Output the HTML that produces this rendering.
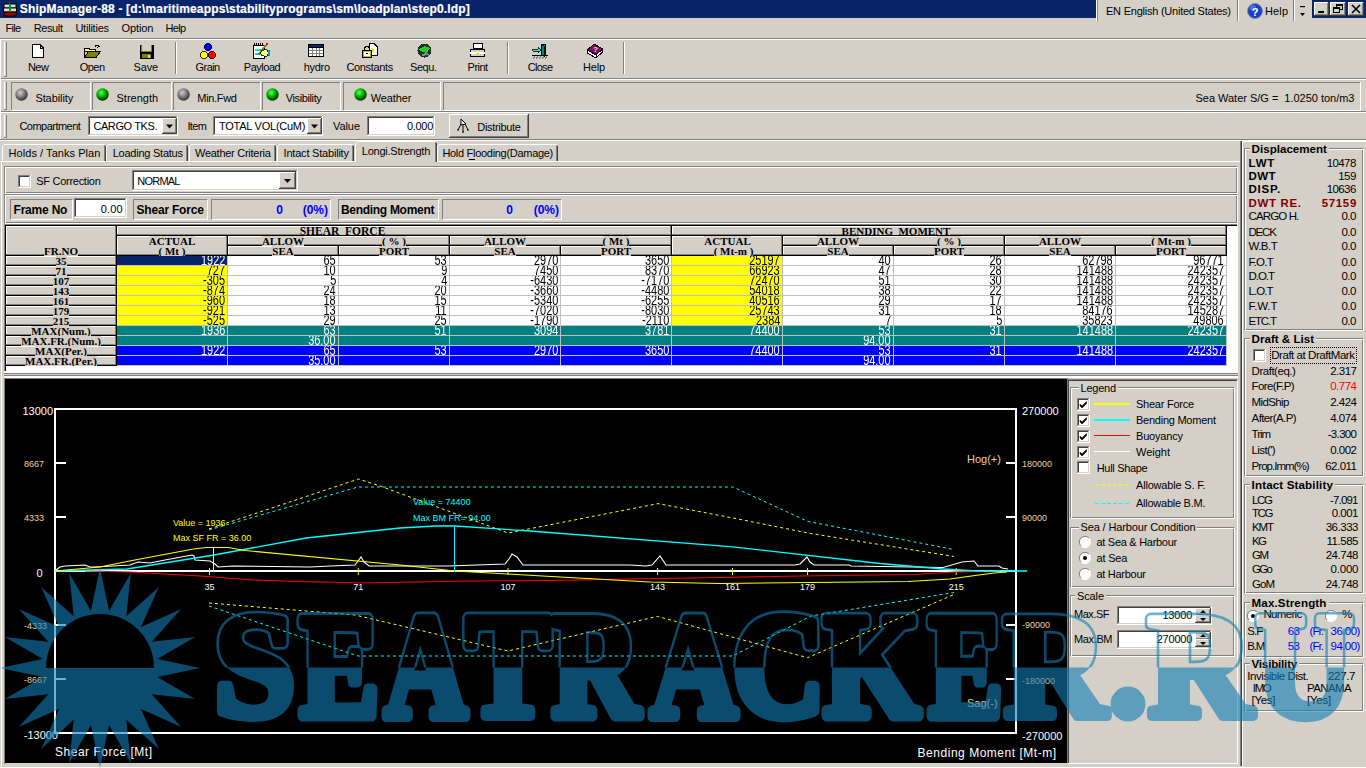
<!DOCTYPE html><html><head><meta charset="utf-8"><style>
html,body{margin:0;padding:0;width:1366px;height:768px;overflow:hidden;background:#d4d0c8;position:relative;font-family:'Liberation Sans', sans-serif;font-size:11px;}
.t{position:absolute;white-space:pre;line-height:11px;font-size:11px;}
.b{position:absolute;box-sizing:border-box;}
svg.b{overflow:visible}
</style></head><body>
<div class="b" style="left:0px;top:0px;width:1096px;height:18px;background:#0a246a;"></div>
<svg class="b" style="left:3px;top:1px" width="14" height="16"><rect x="1" y="3" width="12" height="4" fill="#d8d8d8" stroke="#000" stroke-width="1"/><rect x="0.5" y="7" width="13" height="4" fill="#e0e0e0" stroke="#000" stroke-width="1"/><rect x="1" y="11" width="12" height="4" fill="#a00000" stroke="#000" stroke-width="1"/><rect x="6" y="3" width="2" height="8" fill="#00a000"/><rect x="6" y="0" width="1" height="3" fill="#c00000"/></svg>
<div class="t" style="left:19.8px;top:2.84px;font-size:12px;line-height:12px;color:#fff;font-weight:bold;letter-spacing:0.173px;-webkit-text-stroke:0.2px #fff;">ShipManager-88 - [d:\maritimeapps\stabilityprograms\sm\loadplan\step0.ldp]</div>
<div class="b" style="left:1096px;top:0px;width:1px;height:21px;background:#fff;"></div>
<div class="b" style="left:1097px;top:0px;width:1px;height:21px;background:#808080;"></div>
<div class="t" style="left:1106.0px;top:5.69px;letter-spacing:-0.232px;">EN English (United States)</div>
<div class="b" style="left:1237px;top:0px;width:1px;height:21px;background:#808080;"></div>
<div class="b" style="left:1238px;top:0px;width:1px;height:21px;background:#fff;"></div>
<svg class="b" style="left:1247px;top:3px" width="16" height="16"><circle cx="8" cy="8" r="7.5" fill="#1a3fc0" stroke="#7d8db0" stroke-width="1"/><circle cx="6" cy="5" r="3" fill="#6f8ff0" opacity="0.6"/><text x="8" y="12.5" font-family="Liberation Sans" font-weight="bold" font-size="11" fill="#fff" text-anchor="middle">?</text></svg>
<div class="t" style="left:1265.0px;top:5.69px;letter-spacing:0.133px;">Help</div>
<div class="b" style="left:1293px;top:0px;width:1px;height:21px;background:#808080;"></div>
<div class="b" style="left:1294px;top:0px;width:1px;height:21px;background:#fff;"></div>
<svg class="b" style="left:1299px;top:4px" width="8" height="14"><rect x="1" y="2" width="5" height="1.2" fill="#000"/><path d="M1 9 h5 l-2.5 3z" fill="#000"/></svg>
<div class="b" style="left:1312px;top:0px;width:54px;height:18px;background:#0a246a;"></div>
<div class="b" style="left:1314px;top:2px;width:15px;height:14px;background:#d4d0c8;"></div>
<div class="b" style="left:1314px;top:2px;width:15px;height:1px;background:#fff;"></div>
<div class="b" style="left:1314px;top:2px;width:1px;height:14px;background:#fff;"></div>
<div class="b" style="left:1314px;top:15px;width:15px;height:1px;background:#404040;"></div>
<div class="b" style="left:1328px;top:2px;width:1px;height:14px;background:#404040;"></div>
<div class="b" style="left:1315px;top:14px;width:13px;height:1px;background:#808080;"></div>
<div class="b" style="left:1327px;top:3px;width:1px;height:12px;background:#808080;"></div>
<div class="b" style="left:1318px;top:11px;width:6px;height:2px;background:#000;"></div>
<div class="b" style="left:1330px;top:2px;width:16px;height:14px;background:#d4d0c8;"></div>
<div class="b" style="left:1330px;top:2px;width:16px;height:1px;background:#fff;"></div>
<div class="b" style="left:1330px;top:2px;width:1px;height:14px;background:#fff;"></div>
<div class="b" style="left:1330px;top:15px;width:16px;height:1px;background:#404040;"></div>
<div class="b" style="left:1345px;top:2px;width:1px;height:14px;background:#404040;"></div>
<div class="b" style="left:1331px;top:14px;width:14px;height:1px;background:#808080;"></div>
<div class="b" style="left:1344px;top:3px;width:1px;height:12px;background:#808080;"></div>
<svg class="b" style="left:1330px;top:2px" width="16" height="14"><rect x="6.5" y="2.5" width="6" height="5" fill="none" stroke="#000"/><rect x="6" y="2" width="7" height="2" fill="#000"/><rect x="3.5" y="5.5" width="6" height="5" fill="#d4d0c8" stroke="#000"/><rect x="3" y="5" width="7" height="2" fill="#000"/></svg>
<div class="b" style="left:1348px;top:2px;width:16px;height:14px;background:#d4d0c8;"></div>
<div class="b" style="left:1348px;top:2px;width:16px;height:1px;background:#fff;"></div>
<div class="b" style="left:1348px;top:2px;width:1px;height:14px;background:#fff;"></div>
<div class="b" style="left:1348px;top:15px;width:16px;height:1px;background:#404040;"></div>
<div class="b" style="left:1363px;top:2px;width:1px;height:14px;background:#404040;"></div>
<div class="b" style="left:1349px;top:14px;width:14px;height:1px;background:#808080;"></div>
<div class="b" style="left:1362px;top:3px;width:1px;height:12px;background:#808080;"></div>
<svg class="b" style="left:1348px;top:2px" width="16" height="14"><path d="M4 3 L12 11 M12 3 L4 11" stroke="#000" stroke-width="1.6"/></svg>
<div class="t" style="left:5.6px;top:22.69px;letter-spacing:-0.7px;">File</div>
<div class="t" style="left:33.7px;top:22.69px;letter-spacing:-0.38px;">Result</div>
<div class="t" style="left:75.4px;top:22.69px;letter-spacing:-0.225px;">Utilities</div>
<div class="t" style="left:121.5px;top:22.69px;letter-spacing:-0.1px;">Option</div>
<div class="t" style="left:165.4px;top:22.69px;letter-spacing:-0.6px;">Help</div>
<div class="b" style="left:0px;top:38px;width:1366px;height:1px;background:#808080;"></div>
<div class="b" style="left:0px;top:39px;width:1366px;height:1px;background:#fff;"></div>
<div class="b" style="left:0px;top:78px;width:1366px;height:1px;background:#808080;"></div>
<div class="b" style="left:0px;top:79px;width:1366px;height:1px;background:#fff;"></div>
<div class="b" style="left:0px;top:111px;width:1366px;height:1px;background:#808080;"></div>
<div class="b" style="left:0px;top:112px;width:1366px;height:1px;background:#fff;"></div>
<div class="b" style="left:0px;top:139px;width:1366px;height:1px;background:#808080;"></div>
<div class="b" style="left:0px;top:140px;width:1366px;height:1px;background:#fff;"></div>
<div class="b" style="left:0px;top:39px;width:1px;height:100px;background:#fff;"></div>
<div class="b" style="left:4px;top:42px;width:1px;height:34px;background:#fff;"></div>
<div class="b" style="left:6px;top:42px;width:1px;height:34px;background:#808080;"></div>
<div class="b" style="left:4px;top:76px;width:3px;height:1px;background:#808080;"></div>
<div class="b" style="left:5px;top:42px;width:1px;height:34px;background:#d4d0c8;"></div>
<div class="b" style="left:4px;top:82px;width:1px;height:27px;background:#fff;"></div>
<div class="b" style="left:6px;top:82px;width:1px;height:27px;background:#808080;"></div>
<div class="b" style="left:4px;top:109px;width:3px;height:1px;background:#808080;"></div>
<div class="b" style="left:5px;top:82px;width:1px;height:27px;background:#d4d0c8;"></div>
<div class="b" style="left:4px;top:115px;width:1px;height:22px;background:#fff;"></div>
<div class="b" style="left:6px;top:115px;width:1px;height:22px;background:#808080;"></div>
<div class="b" style="left:4px;top:137px;width:3px;height:1px;background:#808080;"></div>
<div class="b" style="left:5px;top:115px;width:1px;height:22px;background:#d4d0c8;"></div>
<div class="b" style="left:175px;top:42px;width:1px;height:32px;background:#808080;"></div>
<div class="b" style="left:176px;top:42px;width:1px;height:32px;background:#fff;"></div>
<div class="b" style="left:507px;top:42px;width:1px;height:32px;background:#808080;"></div>
<div class="b" style="left:508px;top:42px;width:1px;height:32px;background:#fff;"></div>
<div class="b" style="left:623px;top:42px;width:1px;height:32px;background:#808080;"></div>
<div class="b" style="left:624px;top:42px;width:1px;height:32px;background:#fff;"></div>
<div class="t" style="left:27.9px;top:61.69px;letter-spacing:-0.5px;">New</div>
<div class="t" style="left:79.8px;top:61.69px;letter-spacing:-0.567px;">Open</div>
<div class="t" style="left:133.6px;top:61.69px;letter-spacing:-0.167px;">Save</div>
<div class="t" style="left:195.6px;top:61.69px;letter-spacing:-0.575px;">Grain</div>
<div class="t" style="left:243.8px;top:61.69px;letter-spacing:-0.483px;">Payload</div>
<div class="t" style="left:303.7px;top:61.69px;letter-spacing:-0.3px;">hydro</div>
<div class="t" style="left:346.4px;top:61.69px;letter-spacing:-0.325px;">Constants</div>
<div class="t" style="left:410.0px;top:61.69px;letter-spacing:-0.425px;">Sequ.</div>
<div class="t" style="left:467.6px;top:61.69px;letter-spacing:-0.55px;">Print</div>
<div class="t" style="left:527.7px;top:61.69px;letter-spacing:-0.7px;">Close</div>
<div class="t" style="left:583.0px;top:61.69px;letter-spacing:-0.2px;">Help</div>
<svg class="b" style="left:32px;top:44px" width="12" height="14" shape-rendering="crispEdges"><path d="M0.5 0.5 H8 L11.5 4 V13.5 H0.5 Z" fill="#fff" stroke="#000"/><path d="M8 0.5 V4 H11.5" fill="none" stroke="#000"/></svg>
<svg class="b" style="left:84px;top:44px" width="17" height="14" shape-rendering="crispEdges"><path d="M11 3 Q12 0 15 2" stroke="#000" fill="none" stroke-width="1.2"/><path d="M14 1 l2 1.5 -2.5 1z" fill="#000"/><path d="M0.5 4.5 H5 L6 5.5 H11 V7.5 H0.5 Z" fill="#ffff80" stroke="#000"/><path d="M0.5 5 V13.5 H12 L16.5 7.5 H4.5 L0.5 13.5" fill="#808000" stroke="#000"/></svg>
<svg class="b" style="left:139px;top:44px" width="15" height="15" shape-rendering="crispEdges"><rect x="0.5" y="0.5" width="14" height="14" fill="#000"/><rect x="2" y="1" width="11" height="7" fill="#808000"/><rect x="3" y="1" width="9" height="5.5" fill="#d4d0c8"/><rect x="3" y="10" width="9" height="4" fill="#808000"/><rect x="9" y="10.5" width="2" height="3" fill="#d4d0c8"/></svg>
<svg class="b" style="left:200px;top:43px" width="17" height="17" shape-rendering="crispEdges"><circle cx="8" cy="4" r="3.6" fill="#0000ff" stroke="#000" stroke-width="0.8"/><circle cx="4" cy="12" r="3.6" fill="#ffff00" stroke="#000" stroke-width="0.8"/><circle cx="12" cy="12" r="3.6" fill="#ff0000" stroke="#000" stroke-width="0.8"/></svg>
<svg class="b" style="left:253px;top:43px" width="17" height="16" shape-rendering="crispEdges"><rect x="0.5" y="2.5" width="11" height="13" fill="#fff" stroke="#000"/><path d="M1 1 h10" stroke="#000" stroke-dasharray="1 1" stroke-width="2"/><rect x="2" y="6" width="8" height="2" fill="#00e0e0"/><rect x="2" y="10" width="8" height="2" fill="#00e0e0"/><path d="M5 12 L13 2" stroke="#808000" stroke-width="2"/><path d="M13 2 l1.5 -1.5" stroke="#ff0000" stroke-width="2"/><ellipse cx="11.5" cy="10" rx="4" ry="3.5" fill="#ffff80" stroke="#000" stroke-width="0.8"/><rect x="15" y="7" width="1.5" height="6" fill="#00a0c0"/></svg>
<svg class="b" style="left:308px;top:44px" width="16" height="13" shape-rendering="crispEdges"><rect x="0" y="0" width="16" height="13" fill="#000"/><rect x="1" y="1" width="14" height="2" fill="#0a246a"/><rect x="1" y="4" width="14" height="8" fill="#fff"/><path d="M1 6.5 H15 M1 9.5 H15 M4.5 4 V12 M8 4 V12 M11.5 4 V12" stroke="#808080" stroke-width="1"/></svg>
<svg class="b" style="left:362px;top:43px" width="16" height="15" shape-rendering="crispEdges"><path d="M7.5 0.5 H12 L15.5 4 V12.5 H7.5 Z" fill="#fff" stroke="#000"/><path d="M10 5 l3 2 -3 2z" fill="#e0e000"/><path d="M2.5 7 V5 Q5 2 7.5 5 V7" stroke="#000" fill="none"/><rect x="0.5" y="7.5" width="9" height="7" fill="#c0c000" stroke="#000"/><rect x="2" y="9" width="6" height="4" fill="#fff"/><path d="M3.5 10 h3 l-1.5 2z" fill="#000"/></svg>
<svg class="b" style="left:417px;top:43px" width="15" height="15" shape-rendering="crispEdges"><circle cx="7.5" cy="7.5" r="7" fill="#2a2a2a"/><path d="M2 6 L8 3 L13 5 L10 10 L6 9 L3 8z" fill="#20d020"/><path d="M5 13 Q8 10 12 12" stroke="#7090a0" stroke-width="2" fill="none"/></svg>
<svg class="b" style="left:469px;top:43px" width="17" height="15" shape-rendering="crispEdges"><rect x="4.5" y="0.5" width="9" height="5" fill="#fff" stroke="#000"/><path d="M1.5 6.5 H15.5 V13.5 H1.5 Z" fill="#d4d0c8" stroke="#000"/><rect x="1" y="9" width="15" height="2" fill="#fff"/><rect x="7" y="9.5" width="3" height="1" fill="#e0e000"/><path d="M2 13.5 H15" stroke="#000"/></svg>
<svg class="b" style="left:532px;top:44px" width="17" height="15" shape-rendering="crispEdges"><path d="M9.5 0.5 H13.5 V11.5 H9.5 Z" fill="#00c0c0" stroke="#000"/><path d="M9.5 1 L12.5 3 V13 L9.5 11.5z" fill="#008080" stroke="#000" stroke-width="0.8"/><path d="M0.5 5 H6 V3 L9 6 L6 9 V7 H0.5 Z" fill="#40e0e0" stroke="#000" stroke-width="0.8"/><path d="M0 11.5 H16" stroke="#000"/><path d="M1 14.5 l2 -2 M4 14.5 l2 -2 M7 14.5 l2 -2 M10 14.5 l2 -2 M13 14.5 l2 -2" stroke="#808080"/></svg>
<svg class="b" style="left:587px;top:43px" width="16" height="16" shape-rendering="crispEdges"><path d="M0.5 10 L9 15 L15.5 9 V6 L7 1 L0.5 7z" fill="#fff" stroke="#000"/><path d="M0.5 7 L7 1 L15.5 6 L9 12 Z" fill="#800080" stroke="#000"/><path d="M9 12 V15 M0.5 7 V10" stroke="#000"/><text x="8.5" y="9" font-family="Liberation Sans" font-weight="bold" font-size="8" fill="#ffff00" text-anchor="middle">?</text></svg>
<div class="b" style="left:11px;top:82px;width:80px;height:29px;"></div>
<div class="b" style="left:11px;top:82px;width:80px;height:1px;background:#808080;"></div>
<div class="b" style="left:11px;top:82px;width:1px;height:29px;background:#808080;"></div>
<div class="b" style="left:11px;top:110px;width:80px;height:1px;background:#fff;"></div>
<div class="b" style="left:90px;top:82px;width:1px;height:29px;background:#fff;"></div>
<svg class="b" style="left:15px;top:88px" width="14" height="14"><defs><radialGradient id="g11" cx="0.4" cy="0.35" r="0.6"><stop offset="0" stop-color="#d0d0d0"/><stop offset="0.5" stop-color="#888"/><stop offset="1" stop-color="#404040"/></radialGradient></defs><circle cx="6.5" cy="6.5" r="6.2" fill="url(#g11)"/></svg>
<div class="t" style="left:35.4px;top:92.69px;letter-spacing:-0.088px;">Stability</div>
<div class="b" style="left:92px;top:82px;width:80px;height:29px;"></div>
<div class="b" style="left:92px;top:82px;width:80px;height:1px;background:#808080;"></div>
<div class="b" style="left:92px;top:82px;width:1px;height:29px;background:#808080;"></div>
<div class="b" style="left:92px;top:110px;width:80px;height:1px;background:#fff;"></div>
<div class="b" style="left:171px;top:82px;width:1px;height:29px;background:#fff;"></div>
<svg class="b" style="left:96px;top:88px" width="14" height="14"><defs><radialGradient id="g92" cx="0.4" cy="0.35" r="0.6"><stop offset="0" stop-color="#60ff60"/><stop offset="0.5" stop-color="#00c000"/><stop offset="1" stop-color="#004000"/></radialGradient></defs><circle cx="6.5" cy="6.5" r="6.2" fill="url(#g92)"/></svg>
<div class="t" style="left:116.5px;top:92.69px;letter-spacing:0.014px;">Strength</div>
<div class="b" style="left:173px;top:82px;width:88px;height:29px;"></div>
<div class="b" style="left:173px;top:82px;width:88px;height:1px;background:#808080;"></div>
<div class="b" style="left:173px;top:82px;width:1px;height:29px;background:#808080;"></div>
<div class="b" style="left:173px;top:110px;width:88px;height:1px;background:#fff;"></div>
<div class="b" style="left:260px;top:82px;width:1px;height:29px;background:#fff;"></div>
<svg class="b" style="left:177px;top:88px" width="14" height="14"><defs><radialGradient id="g173" cx="0.4" cy="0.35" r="0.6"><stop offset="0" stop-color="#d0d0d0"/><stop offset="0.5" stop-color="#888"/><stop offset="1" stop-color="#404040"/></radialGradient></defs><circle cx="6.5" cy="6.5" r="6.2" fill="url(#g173)"/></svg>
<div class="t" style="left:197.3px;top:92.69px;letter-spacing:-0.333px;">Min.Fwd</div>
<div class="b" style="left:262px;top:82px;width:79px;height:29px;"></div>
<div class="b" style="left:262px;top:82px;width:79px;height:1px;background:#808080;"></div>
<div class="b" style="left:262px;top:82px;width:1px;height:29px;background:#808080;"></div>
<div class="b" style="left:262px;top:110px;width:79px;height:1px;background:#fff;"></div>
<div class="b" style="left:340px;top:82px;width:1px;height:29px;background:#fff;"></div>
<svg class="b" style="left:266px;top:88px" width="14" height="14"><defs><radialGradient id="g262" cx="0.4" cy="0.35" r="0.6"><stop offset="0" stop-color="#60ff60"/><stop offset="0.5" stop-color="#00c000"/><stop offset="1" stop-color="#004000"/></radialGradient></defs><circle cx="6.5" cy="6.5" r="6.2" fill="url(#g262)"/></svg>
<div class="t" style="left:285.7px;top:92.69px;letter-spacing:-0.378px;">Visibility</div>
<div class="b" style="left:343px;top:82px;width:98px;height:29px;"></div>
<div class="b" style="left:343px;top:82px;width:98px;height:1px;background:#808080;"></div>
<div class="b" style="left:343px;top:82px;width:1px;height:29px;background:#808080;"></div>
<div class="b" style="left:343px;top:110px;width:98px;height:1px;background:#fff;"></div>
<div class="b" style="left:440px;top:82px;width:1px;height:29px;background:#fff;"></div>
<svg class="b" style="left:353.5px;top:88px" width="14" height="14"><defs><radialGradient id="g343" cx="0.4" cy="0.35" r="0.6"><stop offset="0" stop-color="#60ff60"/><stop offset="0.5" stop-color="#00c000"/><stop offset="1" stop-color="#004000"/></radialGradient></defs><circle cx="6.5" cy="6.5" r="6.2" fill="url(#g343)"/></svg>
<div class="t" style="left:370.8px;top:92.69px;letter-spacing:-0.133px;">Weather</div>
<div class="b" style="left:443px;top:82px;width:918px;height:29px;"></div>
<div class="b" style="left:443px;top:82px;width:918px;height:1px;background:#808080;"></div>
<div class="b" style="left:443px;top:82px;width:1px;height:29px;background:#808080;"></div>
<div class="b" style="left:443px;top:110px;width:918px;height:1px;background:#fff;"></div>
<div class="b" style="left:1360px;top:82px;width:1px;height:29px;background:#fff;"></div>
<svg class="b" style="left:447px;top:88px" width="14" height="14"><defs><radialGradient id="g443" cx="0.4" cy="0.35" r="0.6"><stop offset="0" stop-color="#d0d0d0"/><stop offset="0.5" stop-color="#888"/><stop offset="1" stop-color="#404040"/></radialGradient></defs><circle cx="6.5" cy="6.5" r="6.2" fill="url(#g443)"/></svg>
<div class="b" style="left:447px;top:86px;width:16px;height:18px;background:#d4d0c8;"></div>
<div class="t" style="right:11.517000000000053px;text-align:right;top:92.69px;letter-spacing:-0.017px;">Sea Water S/G =  1.0250 ton/m3</div>
<div class="t" style="left:19.4px;top:120.69px;letter-spacing:-0.52px;">Compartment</div>
<div class="b" style="left:88px;top:116px;width:90px;height:20px;background:#fff;"></div>
<div class="b" style="left:88px;top:116px;width:90px;height:1px;background:#808080;"></div>
<div class="b" style="left:88px;top:116px;width:1px;height:20px;background:#808080;"></div>
<div class="b" style="left:89px;top:117px;width:88px;height:1px;background:#404040;"></div>
<div class="b" style="left:89px;top:117px;width:1px;height:18px;background:#404040;"></div>
<div class="b" style="left:88px;top:135px;width:90px;height:1px;background:#fff;"></div>
<div class="b" style="left:177px;top:116px;width:1px;height:20px;background:#fff;"></div>
<div class="b" style="left:89px;top:134px;width:88px;height:1px;background:#d4d0c8;"></div>
<div class="b" style="left:176px;top:117px;width:1px;height:18px;background:#d4d0c8;"></div>
<div class="t" style="left:93.4px;top:120.69px;letter-spacing:-0.4px;">CARGO TKS.</div>
<div class="b" style="left:162px;top:118px;width:15px;height:16px;background:#d4d0c8;"></div>
<div class="b" style="left:162px;top:118px;width:15px;height:1px;background:#fff;"></div>
<div class="b" style="left:162px;top:118px;width:1px;height:16px;background:#fff;"></div>
<div class="b" style="left:162px;top:133px;width:15px;height:1px;background:#404040;"></div>
<div class="b" style="left:176px;top:118px;width:1px;height:16px;background:#404040;"></div>
<div class="b" style="left:163px;top:132px;width:13px;height:1px;background:#808080;"></div>
<div class="b" style="left:175px;top:119px;width:1px;height:14px;background:#808080;"></div>
<svg class="b" style="left:162px;top:118px" width="15" height="16"><path d="M4.0 6.5 h7 l-3.5 4z" fill="#000"/></svg>
<div class="t" style="left:187.4px;top:120.69px;letter-spacing:-0.6px;">Item</div>
<div class="b" style="left:213px;top:116px;width:110px;height:20px;background:#fff;"></div>
<div class="b" style="left:213px;top:116px;width:110px;height:1px;background:#808080;"></div>
<div class="b" style="left:213px;top:116px;width:1px;height:20px;background:#808080;"></div>
<div class="b" style="left:214px;top:117px;width:108px;height:1px;background:#404040;"></div>
<div class="b" style="left:214px;top:117px;width:1px;height:18px;background:#404040;"></div>
<div class="b" style="left:213px;top:135px;width:110px;height:1px;background:#fff;"></div>
<div class="b" style="left:322px;top:116px;width:1px;height:20px;background:#fff;"></div>
<div class="b" style="left:214px;top:134px;width:108px;height:1px;background:#d4d0c8;"></div>
<div class="b" style="left:321px;top:117px;width:1px;height:18px;background:#d4d0c8;"></div>
<div class="t" style="left:219.0px;top:120.69px;letter-spacing:-0.246px;">TOTAL VOL(CuM)</div>
<div class="b" style="left:307px;top:118px;width:15px;height:16px;background:#d4d0c8;"></div>
<div class="b" style="left:307px;top:118px;width:15px;height:1px;background:#fff;"></div>
<div class="b" style="left:307px;top:118px;width:1px;height:16px;background:#fff;"></div>
<div class="b" style="left:307px;top:133px;width:15px;height:1px;background:#404040;"></div>
<div class="b" style="left:321px;top:118px;width:1px;height:16px;background:#404040;"></div>
<div class="b" style="left:308px;top:132px;width:13px;height:1px;background:#808080;"></div>
<div class="b" style="left:320px;top:119px;width:1px;height:14px;background:#808080;"></div>
<svg class="b" style="left:307px;top:118px" width="15" height="16"><path d="M4.0 6.5 h7 l-3.5 4z" fill="#000"/></svg>
<div class="t" style="left:333.0px;top:120.69px;letter-spacing:-0.075px;">Value</div>
<div class="b" style="left:367px;top:116px;width:68px;height:20px;background:#fff;"></div>
<div class="b" style="left:367px;top:116px;width:68px;height:1px;background:#808080;"></div>
<div class="b" style="left:367px;top:116px;width:1px;height:20px;background:#808080;"></div>
<div class="b" style="left:368px;top:117px;width:66px;height:1px;background:#404040;"></div>
<div class="b" style="left:368px;top:117px;width:1px;height:18px;background:#404040;"></div>
<div class="b" style="left:367px;top:135px;width:68px;height:1px;background:#fff;"></div>
<div class="b" style="left:434px;top:116px;width:1px;height:20px;background:#fff;"></div>
<div class="b" style="left:368px;top:134px;width:66px;height:1px;background:#d4d0c8;"></div>
<div class="b" style="left:433px;top:117px;width:1px;height:18px;background:#d4d0c8;"></div>
<div class="t" style="right:933.0px;text-align:right;top:120.69px;letter-spacing:-0.3px;">0.000</div>
<div class="b" style="left:449px;top:114px;width:80px;height:24px;background:#d4d0c8;"></div>
<div class="b" style="left:449px;top:114px;width:80px;height:1px;background:#fff;"></div>
<div class="b" style="left:449px;top:114px;width:1px;height:24px;background:#fff;"></div>
<div class="b" style="left:449px;top:137px;width:80px;height:1px;background:#404040;"></div>
<div class="b" style="left:528px;top:114px;width:1px;height:24px;background:#404040;"></div>
<div class="b" style="left:450px;top:136px;width:78px;height:1px;background:#808080;"></div>
<div class="b" style="left:527px;top:115px;width:1px;height:22px;background:#808080;"></div>
<svg class="b" style="left:455px;top:117px" width="16" height="17"><path d="M6 7 L3 13 M8 7 L8 15 M10 7 L13 13" stroke="#000" stroke-width="1"/><path d="M6 2 L11 7 L6 8 Z" fill="#fff" stroke="#000"/><path d="M2 13 h2 M7 15 h2 M12 13 h2" stroke="#000"/></svg>
<div class="t" style="left:477.3px;top:121.69px;letter-spacing:-0.311px;">Distribute</div>
<div class="b" style="left:0px;top:161px;width:1240px;height:1px;background:#fff;"></div>
<div class="b" style="left:1px;top:161px;width:1px;height:610px;background:#fff;"></div>
<div class="b" style="left:2px;top:144px;width:104px;height:17px;background:#d4d0c8;"></div>
<div class="b" style="left:4px;top:144px;width:101px;height:1px;background:#fff;"></div>
<div class="b" style="left:2px;top:146px;width:1px;height:15px;background:#fff;"></div>
<div class="b" style="left:3px;top:145px;width:1px;height:1px;background:#fff;"></div>
<div class="b" style="left:104px;top:145px;width:1px;height:16px;background:#808080;"></div>
<div class="b" style="left:105px;top:146px;width:1px;height:15px;background:#404040;"></div>
<div class="t" style="left:8.6px;top:147.69px;letter-spacing:0.053px;">Holds / Tanks Plan</div>
<div class="b" style="left:106px;top:144px;width:82px;height:17px;background:#d4d0c8;"></div>
<div class="b" style="left:108px;top:144px;width:79px;height:1px;background:#fff;"></div>
<div class="b" style="left:106px;top:146px;width:1px;height:15px;background:#fff;"></div>
<div class="b" style="left:107px;top:145px;width:1px;height:1px;background:#fff;"></div>
<div class="b" style="left:186px;top:145px;width:1px;height:16px;background:#808080;"></div>
<div class="b" style="left:187px;top:146px;width:1px;height:15px;background:#404040;"></div>
<div class="t" style="left:112.7px;top:147.69px;letter-spacing:-0.238px;">Loading Status</div>
<div class="b" style="left:189px;top:144px;width:87px;height:17px;background:#d4d0c8;"></div>
<div class="b" style="left:191px;top:144px;width:84px;height:1px;background:#fff;"></div>
<div class="b" style="left:189px;top:146px;width:1px;height:15px;background:#fff;"></div>
<div class="b" style="left:190px;top:145px;width:1px;height:1px;background:#fff;"></div>
<div class="b" style="left:274px;top:145px;width:1px;height:16px;background:#808080;"></div>
<div class="b" style="left:275px;top:146px;width:1px;height:15px;background:#404040;"></div>
<div class="t" style="left:195.0px;top:147.69px;letter-spacing:-0.267px;">Weather Criteria</div>
<div class="b" style="left:277px;top:144px;width:77px;height:17px;background:#d4d0c8;"></div>
<div class="b" style="left:279px;top:144px;width:74px;height:1px;background:#fff;"></div>
<div class="b" style="left:277px;top:146px;width:1px;height:15px;background:#fff;"></div>
<div class="b" style="left:278px;top:145px;width:1px;height:1px;background:#fff;"></div>
<div class="b" style="left:352px;top:145px;width:1px;height:16px;background:#808080;"></div>
<div class="b" style="left:353px;top:146px;width:1px;height:15px;background:#404040;"></div>
<div class="t" style="left:283.6px;top:147.69px;letter-spacing:-0.207px;">Intact Stability</div>
<div class="b" style="left:437px;top:144px;width:121px;height:17px;background:#d4d0c8;"></div>
<div class="b" style="left:439px;top:144px;width:118px;height:1px;background:#fff;"></div>
<div class="b" style="left:437px;top:146px;width:1px;height:15px;background:#fff;"></div>
<div class="b" style="left:438px;top:145px;width:1px;height:1px;background:#fff;"></div>
<div class="b" style="left:556px;top:145px;width:1px;height:16px;background:#808080;"></div>
<div class="b" style="left:557px;top:146px;width:1px;height:15px;background:#404040;"></div>
<div class="t" style="left:442.4px;top:147.69px;letter-spacing:-0.295px;">Hold Flooding(Damage)</div>
<div class="b" style="left:355px;top:141px;width:82px;height:22px;background:#d4d0c8;"></div>
<div class="b" style="left:357px;top:141px;width:78px;height:1px;background:#fff;"></div>
<div class="b" style="left:355px;top:143px;width:1px;height:19px;background:#fff;"></div>
<div class="b" style="left:356px;top:142px;width:1px;height:1px;background:#fff;"></div>
<div class="b" style="left:435px;top:142px;width:1px;height:20px;background:#808080;"></div>
<div class="b" style="left:436px;top:143px;width:1px;height:19px;background:#404040;"></div>
<div class="t" style="left:361.8px;top:145.69px;letter-spacing:-0.238px;">Longi.Strength</div>
<div class="b" style="left:469px;top:159px;width:6px;height:1px;background:#000;"></div>
<div class="b" style="left:4px;top:166px;width:1234px;height:28px;border-top:1px solid #808080;border-left:1px solid #808080;border-right:1px solid #fff;border-bottom:1px solid #fff;box-shadow:inset 1px 1px 0 #fff, inset -1px -1px 0 #808080"></div>
<div class="b" style="left:18px;top:175px;width:13px;height:13px;background:#fff;"></div>
<div class="b" style="left:18px;top:175px;width:13px;height:1px;background:#808080;"></div>
<div class="b" style="left:18px;top:175px;width:1px;height:13px;background:#808080;"></div>
<div class="b" style="left:19px;top:176px;width:11px;height:1px;background:#404040;"></div>
<div class="b" style="left:19px;top:176px;width:1px;height:11px;background:#404040;"></div>
<div class="b" style="left:18px;top:187px;width:13px;height:1px;background:#fff;"></div>
<div class="b" style="left:30px;top:175px;width:1px;height:13px;background:#fff;"></div>
<div class="b" style="left:19px;top:186px;width:11px;height:1px;background:#d4d0c8;"></div>
<div class="b" style="left:29px;top:176px;width:1px;height:11px;background:#d4d0c8;"></div>
<div class="t" style="left:36.3px;top:175.69px;letter-spacing:-0.283px;">SF Correction</div>
<div class="b" style="left:132px;top:170px;width:166px;height:21px;background:#fff;"></div>
<div class="b" style="left:132px;top:170px;width:166px;height:1px;background:#808080;"></div>
<div class="b" style="left:132px;top:170px;width:1px;height:21px;background:#808080;"></div>
<div class="b" style="left:133px;top:171px;width:164px;height:1px;background:#404040;"></div>
<div class="b" style="left:133px;top:171px;width:1px;height:19px;background:#404040;"></div>
<div class="b" style="left:132px;top:190px;width:166px;height:1px;background:#fff;"></div>
<div class="b" style="left:297px;top:170px;width:1px;height:21px;background:#fff;"></div>
<div class="b" style="left:133px;top:189px;width:164px;height:1px;background:#d4d0c8;"></div>
<div class="b" style="left:296px;top:171px;width:1px;height:19px;background:#d4d0c8;"></div>
<div class="t" style="left:137.3px;top:175.69px;letter-spacing:-0.78px;">NORMAL</div>
<div class="b" style="left:279px;top:172px;width:17px;height:17px;background:#d4d0c8;"></div>
<div class="b" style="left:279px;top:172px;width:17px;height:1px;background:#fff;"></div>
<div class="b" style="left:279px;top:172px;width:1px;height:17px;background:#fff;"></div>
<div class="b" style="left:279px;top:188px;width:17px;height:1px;background:#404040;"></div>
<div class="b" style="left:295px;top:172px;width:1px;height:17px;background:#404040;"></div>
<div class="b" style="left:280px;top:187px;width:15px;height:1px;background:#808080;"></div>
<div class="b" style="left:294px;top:173px;width:1px;height:15px;background:#808080;"></div>
<svg class="b" style="left:279px;top:172px" width="17" height="17"><path d="M5.0 7.0 h7 l-3.5 4z" fill="#000"/></svg>
<div class="b" style="left:4px;top:194px;width:1234px;height:30px;border-top:1px solid #808080;border-left:1px solid #808080;border-right:1px solid #fff;border-bottom:1px solid #fff;box-shadow:inset 1px 1px 0 #fff, inset -1px -1px 0 #808080"></div>
<div class="b" style="left:10px;top:199px;width:63px;height:21px;border-top:1px solid #808080;border-left:1px solid #808080;border-right:1px solid #fff;border-bottom:1px solid #fff;"></div>
<div class="t" style="left:13.5px;top:203.84px;font-size:12px;line-height:12px;font-weight:bold;letter-spacing:-0.2px;">Frame No</div>
<div class="b" style="left:74px;top:198px;width:53px;height:20px;background:#fff;"></div>
<div class="b" style="left:74px;top:198px;width:53px;height:1px;background:#808080;"></div>
<div class="b" style="left:74px;top:198px;width:1px;height:20px;background:#808080;"></div>
<div class="b" style="left:75px;top:199px;width:51px;height:1px;background:#404040;"></div>
<div class="b" style="left:75px;top:199px;width:1px;height:18px;background:#404040;"></div>
<div class="b" style="left:74px;top:217px;width:53px;height:1px;background:#fff;"></div>
<div class="b" style="left:126px;top:198px;width:1px;height:20px;background:#fff;"></div>
<div class="b" style="left:75px;top:216px;width:51px;height:1px;background:#d4d0c8;"></div>
<div class="b" style="left:125px;top:199px;width:1px;height:18px;background:#d4d0c8;"></div>
<div class="t" style="right:1243.267px;text-align:right;top:204.19px;letter-spacing:0.133px;">0.00</div>
<div class="b" style="left:133px;top:199px;width:75px;height:21px;border-top:1px solid #808080;border-left:1px solid #808080;border-right:1px solid #fff;border-bottom:1px solid #fff;"></div>
<div class="t" style="left:136.5px;top:203.84px;font-size:12px;line-height:12px;font-weight:bold;letter-spacing:-0.2px;">Shear Force</div>
<div class="b" style="left:211px;top:199px;width:120px;height:21px;border-top:1px solid #808080;border-left:1px solid #808080;border-right:1px solid #fff;border-bottom:1px solid #fff;"></div>
<div class="t" style="right:1083px;text-align:right;top:203.84px;font-size:12px;line-height:12px;color:#0000ff;font-weight:bold;">0</div>
<div class="t" style="right:1038px;text-align:right;top:203.84px;font-size:12px;line-height:12px;color:#0000ff;font-weight:bold;">(0%)</div>
<div class="b" style="left:338px;top:199px;width:101px;height:21px;border-top:1px solid #808080;border-left:1px solid #808080;border-right:1px solid #fff;border-bottom:1px solid #fff;"></div>
<div class="t" style="left:341px;top:203.84px;font-size:12px;line-height:12px;font-weight:bold;letter-spacing:-0.3px;">Bending Moment</div>
<div class="b" style="left:442px;top:199px;width:120px;height:21px;border-top:1px solid #808080;border-left:1px solid #808080;border-right:1px solid #fff;border-bottom:1px solid #fff;"></div>
<div class="t" style="right:853px;text-align:right;top:203.84px;font-size:12px;line-height:12px;color:#0000ff;font-weight:bold;">0</div>
<div class="t" style="right:807px;text-align:right;top:203.84px;font-size:12px;line-height:12px;color:#0000ff;font-weight:bold;">(0%)</div>
<div class="b" style="left:4px;top:224px;width:1234px;height:148px;background:#fff;"></div>
<div class="b" style="left:4px;top:224px;width:1234px;height:1px;background:#808080;"></div>
<div class="b" style="left:4px;top:224px;width:1px;height:148px;background:#808080;"></div>
<div class="b" style="left:5px;top:225px;width:1232px;height:1px;background:#000;"></div>
<div class="b" style="left:5px;top:225px;width:1px;height:146px;background:#000;"></div>
<div class="b" style="left:4px;top:371px;width:1234px;height:1px;background:#fff;"></div>
<div class="b" style="left:1237px;top:224px;width:1px;height:148px;background:#fff;"></div>
<div class="b" style="left:6px;top:226px;width:111px;height:30px;background:#d4d0c8;"></div>
<div class="b" style="left:6px;top:226px;width:110px;height:1px;background:#fff;"></div>
<div class="b" style="left:6px;top:226px;width:1px;height:29px;background:#fff;"></div>
<div class="b" style="left:6px;top:255px;width:111px;height:1px;background:#000;"></div>
<div class="b" style="left:116px;top:226px;width:1px;height:30px;background:#000;"></div>
<div class="b" style="left:6px;top:254px;width:110px;height:1px;background:#808080;"></div>
<div class="b" style="left:115px;top:226px;width:1px;height:29px;background:#808080;"></div>
<div class="b" style="left:117px;top:226px;width:555px;height:10px;background:#d4d0c8;"></div>
<div class="b" style="left:117px;top:226px;width:554px;height:1px;background:#fff;"></div>
<div class="b" style="left:117px;top:226px;width:1px;height:9px;background:#fff;"></div>
<div class="b" style="left:117px;top:235px;width:555px;height:1px;background:#000;"></div>
<div class="b" style="left:671px;top:226px;width:1px;height:10px;background:#000;"></div>
<div class="b" style="left:117px;top:234px;width:554px;height:1px;background:#808080;"></div>
<div class="b" style="left:670px;top:226px;width:1px;height:9px;background:#808080;"></div>
<div class="b" style="left:672px;top:226px;width:555px;height:10px;background:#d4d0c8;"></div>
<div class="b" style="left:672px;top:226px;width:554px;height:1px;background:#fff;"></div>
<div class="b" style="left:672px;top:226px;width:1px;height:9px;background:#fff;"></div>
<div class="b" style="left:672px;top:235px;width:555px;height:1px;background:#000;"></div>
<div class="b" style="left:1226px;top:226px;width:1px;height:10px;background:#000;"></div>
<div class="b" style="left:672px;top:234px;width:554px;height:1px;background:#808080;"></div>
<div class="b" style="left:1225px;top:226px;width:1px;height:9px;background:#808080;"></div>
<div class="b" style="left:117px;top:236px;width:111px;height:20px;background:#d4d0c8;"></div>
<div class="b" style="left:117px;top:236px;width:110px;height:1px;background:#fff;"></div>
<div class="b" style="left:117px;top:236px;width:1px;height:19px;background:#fff;"></div>
<div class="b" style="left:117px;top:255px;width:111px;height:1px;background:#000;"></div>
<div class="b" style="left:227px;top:236px;width:1px;height:20px;background:#000;"></div>
<div class="b" style="left:117px;top:254px;width:110px;height:1px;background:#808080;"></div>
<div class="b" style="left:226px;top:236px;width:1px;height:19px;background:#808080;"></div>
<div class="b" style="left:228px;top:236px;width:222px;height:10px;background:#d4d0c8;"></div>
<div class="b" style="left:228px;top:236px;width:221px;height:1px;background:#fff;"></div>
<div class="b" style="left:228px;top:236px;width:1px;height:9px;background:#fff;"></div>
<div class="b" style="left:228px;top:245px;width:222px;height:1px;background:#000;"></div>
<div class="b" style="left:449px;top:236px;width:1px;height:10px;background:#000;"></div>
<div class="b" style="left:228px;top:244px;width:221px;height:1px;background:#808080;"></div>
<div class="b" style="left:448px;top:236px;width:1px;height:9px;background:#808080;"></div>
<div class="b" style="left:450px;top:236px;width:222px;height:10px;background:#d4d0c8;"></div>
<div class="b" style="left:450px;top:236px;width:221px;height:1px;background:#fff;"></div>
<div class="b" style="left:450px;top:236px;width:1px;height:9px;background:#fff;"></div>
<div class="b" style="left:450px;top:245px;width:222px;height:1px;background:#000;"></div>
<div class="b" style="left:671px;top:236px;width:1px;height:10px;background:#000;"></div>
<div class="b" style="left:450px;top:244px;width:221px;height:1px;background:#808080;"></div>
<div class="b" style="left:670px;top:236px;width:1px;height:9px;background:#808080;"></div>
<div class="b" style="left:672px;top:236px;width:111px;height:20px;background:#d4d0c8;"></div>
<div class="b" style="left:672px;top:236px;width:110px;height:1px;background:#fff;"></div>
<div class="b" style="left:672px;top:236px;width:1px;height:19px;background:#fff;"></div>
<div class="b" style="left:672px;top:255px;width:111px;height:1px;background:#000;"></div>
<div class="b" style="left:782px;top:236px;width:1px;height:20px;background:#000;"></div>
<div class="b" style="left:672px;top:254px;width:110px;height:1px;background:#808080;"></div>
<div class="b" style="left:781px;top:236px;width:1px;height:19px;background:#808080;"></div>
<div class="b" style="left:783px;top:236px;width:222px;height:10px;background:#d4d0c8;"></div>
<div class="b" style="left:783px;top:236px;width:221px;height:1px;background:#fff;"></div>
<div class="b" style="left:783px;top:236px;width:1px;height:9px;background:#fff;"></div>
<div class="b" style="left:783px;top:245px;width:222px;height:1px;background:#000;"></div>
<div class="b" style="left:1004px;top:236px;width:1px;height:10px;background:#000;"></div>
<div class="b" style="left:783px;top:244px;width:221px;height:1px;background:#808080;"></div>
<div class="b" style="left:1003px;top:236px;width:1px;height:9px;background:#808080;"></div>
<div class="b" style="left:1005px;top:236px;width:222px;height:10px;background:#d4d0c8;"></div>
<div class="b" style="left:1005px;top:236px;width:221px;height:1px;background:#fff;"></div>
<div class="b" style="left:1005px;top:236px;width:1px;height:9px;background:#fff;"></div>
<div class="b" style="left:1005px;top:245px;width:222px;height:1px;background:#000;"></div>
<div class="b" style="left:1226px;top:236px;width:1px;height:10px;background:#000;"></div>
<div class="b" style="left:1005px;top:244px;width:221px;height:1px;background:#808080;"></div>
<div class="b" style="left:1225px;top:236px;width:1px;height:9px;background:#808080;"></div>
<div class="b" style="left:228px;top:246px;width:111px;height:10px;background:#d4d0c8;"></div>
<div class="b" style="left:228px;top:246px;width:110px;height:1px;background:#fff;"></div>
<div class="b" style="left:228px;top:246px;width:1px;height:9px;background:#fff;"></div>
<div class="b" style="left:228px;top:255px;width:111px;height:1px;background:#000;"></div>
<div class="b" style="left:338px;top:246px;width:1px;height:10px;background:#000;"></div>
<div class="b" style="left:228px;top:254px;width:110px;height:1px;background:#808080;"></div>
<div class="b" style="left:337px;top:246px;width:1px;height:9px;background:#808080;"></div>
<div class="b" style="left:339px;top:246px;width:111px;height:10px;background:#d4d0c8;"></div>
<div class="b" style="left:339px;top:246px;width:110px;height:1px;background:#fff;"></div>
<div class="b" style="left:339px;top:246px;width:1px;height:9px;background:#fff;"></div>
<div class="b" style="left:339px;top:255px;width:111px;height:1px;background:#000;"></div>
<div class="b" style="left:449px;top:246px;width:1px;height:10px;background:#000;"></div>
<div class="b" style="left:339px;top:254px;width:110px;height:1px;background:#808080;"></div>
<div class="b" style="left:448px;top:246px;width:1px;height:9px;background:#808080;"></div>
<div class="b" style="left:450px;top:246px;width:111px;height:10px;background:#d4d0c8;"></div>
<div class="b" style="left:450px;top:246px;width:110px;height:1px;background:#fff;"></div>
<div class="b" style="left:450px;top:246px;width:1px;height:9px;background:#fff;"></div>
<div class="b" style="left:450px;top:255px;width:111px;height:1px;background:#000;"></div>
<div class="b" style="left:560px;top:246px;width:1px;height:10px;background:#000;"></div>
<div class="b" style="left:450px;top:254px;width:110px;height:1px;background:#808080;"></div>
<div class="b" style="left:559px;top:246px;width:1px;height:9px;background:#808080;"></div>
<div class="b" style="left:561px;top:246px;width:111px;height:10px;background:#d4d0c8;"></div>
<div class="b" style="left:561px;top:246px;width:110px;height:1px;background:#fff;"></div>
<div class="b" style="left:561px;top:246px;width:1px;height:9px;background:#fff;"></div>
<div class="b" style="left:561px;top:255px;width:111px;height:1px;background:#000;"></div>
<div class="b" style="left:671px;top:246px;width:1px;height:10px;background:#000;"></div>
<div class="b" style="left:561px;top:254px;width:110px;height:1px;background:#808080;"></div>
<div class="b" style="left:670px;top:246px;width:1px;height:9px;background:#808080;"></div>
<div class="b" style="left:783px;top:246px;width:111px;height:10px;background:#d4d0c8;"></div>
<div class="b" style="left:783px;top:246px;width:110px;height:1px;background:#fff;"></div>
<div class="b" style="left:783px;top:246px;width:1px;height:9px;background:#fff;"></div>
<div class="b" style="left:783px;top:255px;width:111px;height:1px;background:#000;"></div>
<div class="b" style="left:893px;top:246px;width:1px;height:10px;background:#000;"></div>
<div class="b" style="left:783px;top:254px;width:110px;height:1px;background:#808080;"></div>
<div class="b" style="left:892px;top:246px;width:1px;height:9px;background:#808080;"></div>
<div class="b" style="left:894px;top:246px;width:111px;height:10px;background:#d4d0c8;"></div>
<div class="b" style="left:894px;top:246px;width:110px;height:1px;background:#fff;"></div>
<div class="b" style="left:894px;top:246px;width:1px;height:9px;background:#fff;"></div>
<div class="b" style="left:894px;top:255px;width:111px;height:1px;background:#000;"></div>
<div class="b" style="left:1004px;top:246px;width:1px;height:10px;background:#000;"></div>
<div class="b" style="left:894px;top:254px;width:110px;height:1px;background:#808080;"></div>
<div class="b" style="left:1003px;top:246px;width:1px;height:9px;background:#808080;"></div>
<div class="b" style="left:1005px;top:246px;width:111px;height:10px;background:#d4d0c8;"></div>
<div class="b" style="left:1005px;top:246px;width:110px;height:1px;background:#fff;"></div>
<div class="b" style="left:1005px;top:246px;width:1px;height:9px;background:#fff;"></div>
<div class="b" style="left:1005px;top:255px;width:111px;height:1px;background:#000;"></div>
<div class="b" style="left:1115px;top:246px;width:1px;height:10px;background:#000;"></div>
<div class="b" style="left:1005px;top:254px;width:110px;height:1px;background:#808080;"></div>
<div class="b" style="left:1114px;top:246px;width:1px;height:9px;background:#808080;"></div>
<div class="b" style="left:1116px;top:246px;width:111px;height:10px;background:#d4d0c8;"></div>
<div class="b" style="left:1116px;top:246px;width:110px;height:1px;background:#fff;"></div>
<div class="b" style="left:1116px;top:246px;width:1px;height:9px;background:#fff;"></div>
<div class="b" style="left:1116px;top:255px;width:111px;height:1px;background:#000;"></div>
<div class="b" style="left:1226px;top:246px;width:1px;height:10px;background:#000;"></div>
<div class="b" style="left:1116px;top:254px;width:110px;height:1px;background:#808080;"></div>
<div class="b" style="left:1225px;top:246px;width:1px;height:9px;background:#808080;"></div>
<div class="b" style="left:6px;top:256px;width:111px;height:10px;background:#d4d0c8;"></div>
<div class="b" style="left:6px;top:256px;width:110px;height:1px;background:#fff;"></div>
<div class="b" style="left:6px;top:256px;width:1px;height:9px;background:#fff;"></div>
<div class="b" style="left:6px;top:265px;width:111px;height:1px;background:#000;"></div>
<div class="b" style="left:116px;top:256px;width:1px;height:10px;background:#000;"></div>
<div class="b" style="left:6px;top:264px;width:110px;height:1px;background:#808080;"></div>
<div class="b" style="left:115px;top:256px;width:1px;height:9px;background:#808080;"></div>
<div class="b" style="left:117px;top:256px;width:110px;height:9px;background:#0a246a;"></div>
<div class="b" style="left:117px;top:265px;width:111px;height:1px;background:#c0c0c0;"></div>
<div class="b" style="left:227px;top:256px;width:1px;height:10px;background:#c0c0c0;"></div>
<div class="b" style="left:228px;top:256px;width:110px;height:9px;background:#fff;"></div>
<div class="b" style="left:228px;top:265px;width:111px;height:1px;background:#c0c0c0;"></div>
<div class="b" style="left:338px;top:256px;width:1px;height:10px;background:#c0c0c0;"></div>
<div class="b" style="left:339px;top:256px;width:110px;height:9px;background:#fff;"></div>
<div class="b" style="left:339px;top:265px;width:111px;height:1px;background:#c0c0c0;"></div>
<div class="b" style="left:449px;top:256px;width:1px;height:10px;background:#c0c0c0;"></div>
<div class="b" style="left:450px;top:256px;width:110px;height:9px;background:#fff;"></div>
<div class="b" style="left:450px;top:265px;width:111px;height:1px;background:#c0c0c0;"></div>
<div class="b" style="left:560px;top:256px;width:1px;height:10px;background:#c0c0c0;"></div>
<div class="b" style="left:561px;top:256px;width:110px;height:9px;background:#fff;"></div>
<div class="b" style="left:561px;top:265px;width:111px;height:1px;background:#c0c0c0;"></div>
<div class="b" style="left:671px;top:256px;width:1px;height:10px;background:#c0c0c0;"></div>
<div class="b" style="left:672px;top:256px;width:110px;height:9px;background:#ffff00;"></div>
<div class="b" style="left:672px;top:265px;width:111px;height:1px;background:#c0c0c0;"></div>
<div class="b" style="left:782px;top:256px;width:1px;height:10px;background:#c0c0c0;"></div>
<div class="b" style="left:783px;top:256px;width:110px;height:9px;background:#fff;"></div>
<div class="b" style="left:783px;top:265px;width:111px;height:1px;background:#c0c0c0;"></div>
<div class="b" style="left:893px;top:256px;width:1px;height:10px;background:#c0c0c0;"></div>
<div class="b" style="left:894px;top:256px;width:110px;height:9px;background:#fff;"></div>
<div class="b" style="left:894px;top:265px;width:111px;height:1px;background:#c0c0c0;"></div>
<div class="b" style="left:1004px;top:256px;width:1px;height:10px;background:#c0c0c0;"></div>
<div class="b" style="left:1005px;top:256px;width:110px;height:9px;background:#fff;"></div>
<div class="b" style="left:1005px;top:265px;width:111px;height:1px;background:#c0c0c0;"></div>
<div class="b" style="left:1115px;top:256px;width:1px;height:10px;background:#c0c0c0;"></div>
<div class="b" style="left:1116px;top:256px;width:110px;height:9px;background:#fff;"></div>
<div class="b" style="left:1116px;top:265px;width:111px;height:1px;background:#c0c0c0;"></div>
<div class="b" style="left:1226px;top:256px;width:1px;height:10px;background:#c0c0c0;"></div>
<div class="b" style="left:6px;top:266px;width:111px;height:10px;background:#d4d0c8;"></div>
<div class="b" style="left:6px;top:266px;width:110px;height:1px;background:#fff;"></div>
<div class="b" style="left:6px;top:266px;width:1px;height:9px;background:#fff;"></div>
<div class="b" style="left:6px;top:275px;width:111px;height:1px;background:#000;"></div>
<div class="b" style="left:116px;top:266px;width:1px;height:10px;background:#000;"></div>
<div class="b" style="left:6px;top:274px;width:110px;height:1px;background:#808080;"></div>
<div class="b" style="left:115px;top:266px;width:1px;height:9px;background:#808080;"></div>
<div class="b" style="left:117px;top:266px;width:110px;height:9px;background:#ffff00;"></div>
<div class="b" style="left:117px;top:275px;width:111px;height:1px;background:#c0c0c0;"></div>
<div class="b" style="left:227px;top:266px;width:1px;height:10px;background:#c0c0c0;"></div>
<div class="b" style="left:228px;top:266px;width:110px;height:9px;background:#fff;"></div>
<div class="b" style="left:228px;top:275px;width:111px;height:1px;background:#c0c0c0;"></div>
<div class="b" style="left:338px;top:266px;width:1px;height:10px;background:#c0c0c0;"></div>
<div class="b" style="left:339px;top:266px;width:110px;height:9px;background:#fff;"></div>
<div class="b" style="left:339px;top:275px;width:111px;height:1px;background:#c0c0c0;"></div>
<div class="b" style="left:449px;top:266px;width:1px;height:10px;background:#c0c0c0;"></div>
<div class="b" style="left:450px;top:266px;width:110px;height:9px;background:#fff;"></div>
<div class="b" style="left:450px;top:275px;width:111px;height:1px;background:#c0c0c0;"></div>
<div class="b" style="left:560px;top:266px;width:1px;height:10px;background:#c0c0c0;"></div>
<div class="b" style="left:561px;top:266px;width:110px;height:9px;background:#fff;"></div>
<div class="b" style="left:561px;top:275px;width:111px;height:1px;background:#c0c0c0;"></div>
<div class="b" style="left:671px;top:266px;width:1px;height:10px;background:#c0c0c0;"></div>
<div class="b" style="left:672px;top:266px;width:110px;height:9px;background:#ffff00;"></div>
<div class="b" style="left:672px;top:275px;width:111px;height:1px;background:#c0c0c0;"></div>
<div class="b" style="left:782px;top:266px;width:1px;height:10px;background:#c0c0c0;"></div>
<div class="b" style="left:783px;top:266px;width:110px;height:9px;background:#fff;"></div>
<div class="b" style="left:783px;top:275px;width:111px;height:1px;background:#c0c0c0;"></div>
<div class="b" style="left:893px;top:266px;width:1px;height:10px;background:#c0c0c0;"></div>
<div class="b" style="left:894px;top:266px;width:110px;height:9px;background:#fff;"></div>
<div class="b" style="left:894px;top:275px;width:111px;height:1px;background:#c0c0c0;"></div>
<div class="b" style="left:1004px;top:266px;width:1px;height:10px;background:#c0c0c0;"></div>
<div class="b" style="left:1005px;top:266px;width:110px;height:9px;background:#fff;"></div>
<div class="b" style="left:1005px;top:275px;width:111px;height:1px;background:#c0c0c0;"></div>
<div class="b" style="left:1115px;top:266px;width:1px;height:10px;background:#c0c0c0;"></div>
<div class="b" style="left:1116px;top:266px;width:110px;height:9px;background:#fff;"></div>
<div class="b" style="left:1116px;top:275px;width:111px;height:1px;background:#c0c0c0;"></div>
<div class="b" style="left:1226px;top:266px;width:1px;height:10px;background:#c0c0c0;"></div>
<div class="b" style="left:6px;top:276px;width:111px;height:10px;background:#d4d0c8;"></div>
<div class="b" style="left:6px;top:276px;width:110px;height:1px;background:#fff;"></div>
<div class="b" style="left:6px;top:276px;width:1px;height:9px;background:#fff;"></div>
<div class="b" style="left:6px;top:285px;width:111px;height:1px;background:#000;"></div>
<div class="b" style="left:116px;top:276px;width:1px;height:10px;background:#000;"></div>
<div class="b" style="left:6px;top:284px;width:110px;height:1px;background:#808080;"></div>
<div class="b" style="left:115px;top:276px;width:1px;height:9px;background:#808080;"></div>
<div class="b" style="left:117px;top:276px;width:110px;height:9px;background:#ffff00;"></div>
<div class="b" style="left:117px;top:285px;width:111px;height:1px;background:#c0c0c0;"></div>
<div class="b" style="left:227px;top:276px;width:1px;height:10px;background:#c0c0c0;"></div>
<div class="b" style="left:228px;top:276px;width:110px;height:9px;background:#fff;"></div>
<div class="b" style="left:228px;top:285px;width:111px;height:1px;background:#c0c0c0;"></div>
<div class="b" style="left:338px;top:276px;width:1px;height:10px;background:#c0c0c0;"></div>
<div class="b" style="left:339px;top:276px;width:110px;height:9px;background:#fff;"></div>
<div class="b" style="left:339px;top:285px;width:111px;height:1px;background:#c0c0c0;"></div>
<div class="b" style="left:449px;top:276px;width:1px;height:10px;background:#c0c0c0;"></div>
<div class="b" style="left:450px;top:276px;width:110px;height:9px;background:#fff;"></div>
<div class="b" style="left:450px;top:285px;width:111px;height:1px;background:#c0c0c0;"></div>
<div class="b" style="left:560px;top:276px;width:1px;height:10px;background:#c0c0c0;"></div>
<div class="b" style="left:561px;top:276px;width:110px;height:9px;background:#fff;"></div>
<div class="b" style="left:561px;top:285px;width:111px;height:1px;background:#c0c0c0;"></div>
<div class="b" style="left:671px;top:276px;width:1px;height:10px;background:#c0c0c0;"></div>
<div class="b" style="left:672px;top:276px;width:110px;height:9px;background:#ffff00;"></div>
<div class="b" style="left:672px;top:285px;width:111px;height:1px;background:#c0c0c0;"></div>
<div class="b" style="left:782px;top:276px;width:1px;height:10px;background:#c0c0c0;"></div>
<div class="b" style="left:783px;top:276px;width:110px;height:9px;background:#fff;"></div>
<div class="b" style="left:783px;top:285px;width:111px;height:1px;background:#c0c0c0;"></div>
<div class="b" style="left:893px;top:276px;width:1px;height:10px;background:#c0c0c0;"></div>
<div class="b" style="left:894px;top:276px;width:110px;height:9px;background:#fff;"></div>
<div class="b" style="left:894px;top:285px;width:111px;height:1px;background:#c0c0c0;"></div>
<div class="b" style="left:1004px;top:276px;width:1px;height:10px;background:#c0c0c0;"></div>
<div class="b" style="left:1005px;top:276px;width:110px;height:9px;background:#fff;"></div>
<div class="b" style="left:1005px;top:285px;width:111px;height:1px;background:#c0c0c0;"></div>
<div class="b" style="left:1115px;top:276px;width:1px;height:10px;background:#c0c0c0;"></div>
<div class="b" style="left:1116px;top:276px;width:110px;height:9px;background:#fff;"></div>
<div class="b" style="left:1116px;top:285px;width:111px;height:1px;background:#c0c0c0;"></div>
<div class="b" style="left:1226px;top:276px;width:1px;height:10px;background:#c0c0c0;"></div>
<div class="b" style="left:6px;top:286px;width:111px;height:10px;background:#d4d0c8;"></div>
<div class="b" style="left:6px;top:286px;width:110px;height:1px;background:#fff;"></div>
<div class="b" style="left:6px;top:286px;width:1px;height:9px;background:#fff;"></div>
<div class="b" style="left:6px;top:295px;width:111px;height:1px;background:#000;"></div>
<div class="b" style="left:116px;top:286px;width:1px;height:10px;background:#000;"></div>
<div class="b" style="left:6px;top:294px;width:110px;height:1px;background:#808080;"></div>
<div class="b" style="left:115px;top:286px;width:1px;height:9px;background:#808080;"></div>
<div class="b" style="left:117px;top:286px;width:110px;height:9px;background:#ffff00;"></div>
<div class="b" style="left:117px;top:295px;width:111px;height:1px;background:#c0c0c0;"></div>
<div class="b" style="left:227px;top:286px;width:1px;height:10px;background:#c0c0c0;"></div>
<div class="b" style="left:228px;top:286px;width:110px;height:9px;background:#fff;"></div>
<div class="b" style="left:228px;top:295px;width:111px;height:1px;background:#c0c0c0;"></div>
<div class="b" style="left:338px;top:286px;width:1px;height:10px;background:#c0c0c0;"></div>
<div class="b" style="left:339px;top:286px;width:110px;height:9px;background:#fff;"></div>
<div class="b" style="left:339px;top:295px;width:111px;height:1px;background:#c0c0c0;"></div>
<div class="b" style="left:449px;top:286px;width:1px;height:10px;background:#c0c0c0;"></div>
<div class="b" style="left:450px;top:286px;width:110px;height:9px;background:#fff;"></div>
<div class="b" style="left:450px;top:295px;width:111px;height:1px;background:#c0c0c0;"></div>
<div class="b" style="left:560px;top:286px;width:1px;height:10px;background:#c0c0c0;"></div>
<div class="b" style="left:561px;top:286px;width:110px;height:9px;background:#fff;"></div>
<div class="b" style="left:561px;top:295px;width:111px;height:1px;background:#c0c0c0;"></div>
<div class="b" style="left:671px;top:286px;width:1px;height:10px;background:#c0c0c0;"></div>
<div class="b" style="left:672px;top:286px;width:110px;height:9px;background:#ffff00;"></div>
<div class="b" style="left:672px;top:295px;width:111px;height:1px;background:#c0c0c0;"></div>
<div class="b" style="left:782px;top:286px;width:1px;height:10px;background:#c0c0c0;"></div>
<div class="b" style="left:783px;top:286px;width:110px;height:9px;background:#fff;"></div>
<div class="b" style="left:783px;top:295px;width:111px;height:1px;background:#c0c0c0;"></div>
<div class="b" style="left:893px;top:286px;width:1px;height:10px;background:#c0c0c0;"></div>
<div class="b" style="left:894px;top:286px;width:110px;height:9px;background:#fff;"></div>
<div class="b" style="left:894px;top:295px;width:111px;height:1px;background:#c0c0c0;"></div>
<div class="b" style="left:1004px;top:286px;width:1px;height:10px;background:#c0c0c0;"></div>
<div class="b" style="left:1005px;top:286px;width:110px;height:9px;background:#fff;"></div>
<div class="b" style="left:1005px;top:295px;width:111px;height:1px;background:#c0c0c0;"></div>
<div class="b" style="left:1115px;top:286px;width:1px;height:10px;background:#c0c0c0;"></div>
<div class="b" style="left:1116px;top:286px;width:110px;height:9px;background:#fff;"></div>
<div class="b" style="left:1116px;top:295px;width:111px;height:1px;background:#c0c0c0;"></div>
<div class="b" style="left:1226px;top:286px;width:1px;height:10px;background:#c0c0c0;"></div>
<div class="b" style="left:6px;top:296px;width:111px;height:10px;background:#d4d0c8;"></div>
<div class="b" style="left:6px;top:296px;width:110px;height:1px;background:#fff;"></div>
<div class="b" style="left:6px;top:296px;width:1px;height:9px;background:#fff;"></div>
<div class="b" style="left:6px;top:305px;width:111px;height:1px;background:#000;"></div>
<div class="b" style="left:116px;top:296px;width:1px;height:10px;background:#000;"></div>
<div class="b" style="left:6px;top:304px;width:110px;height:1px;background:#808080;"></div>
<div class="b" style="left:115px;top:296px;width:1px;height:9px;background:#808080;"></div>
<div class="b" style="left:117px;top:296px;width:110px;height:9px;background:#ffff00;"></div>
<div class="b" style="left:117px;top:305px;width:111px;height:1px;background:#c0c0c0;"></div>
<div class="b" style="left:227px;top:296px;width:1px;height:10px;background:#c0c0c0;"></div>
<div class="b" style="left:228px;top:296px;width:110px;height:9px;background:#fff;"></div>
<div class="b" style="left:228px;top:305px;width:111px;height:1px;background:#c0c0c0;"></div>
<div class="b" style="left:338px;top:296px;width:1px;height:10px;background:#c0c0c0;"></div>
<div class="b" style="left:339px;top:296px;width:110px;height:9px;background:#fff;"></div>
<div class="b" style="left:339px;top:305px;width:111px;height:1px;background:#c0c0c0;"></div>
<div class="b" style="left:449px;top:296px;width:1px;height:10px;background:#c0c0c0;"></div>
<div class="b" style="left:450px;top:296px;width:110px;height:9px;background:#fff;"></div>
<div class="b" style="left:450px;top:305px;width:111px;height:1px;background:#c0c0c0;"></div>
<div class="b" style="left:560px;top:296px;width:1px;height:10px;background:#c0c0c0;"></div>
<div class="b" style="left:561px;top:296px;width:110px;height:9px;background:#fff;"></div>
<div class="b" style="left:561px;top:305px;width:111px;height:1px;background:#c0c0c0;"></div>
<div class="b" style="left:671px;top:296px;width:1px;height:10px;background:#c0c0c0;"></div>
<div class="b" style="left:672px;top:296px;width:110px;height:9px;background:#ffff00;"></div>
<div class="b" style="left:672px;top:305px;width:111px;height:1px;background:#c0c0c0;"></div>
<div class="b" style="left:782px;top:296px;width:1px;height:10px;background:#c0c0c0;"></div>
<div class="b" style="left:783px;top:296px;width:110px;height:9px;background:#fff;"></div>
<div class="b" style="left:783px;top:305px;width:111px;height:1px;background:#c0c0c0;"></div>
<div class="b" style="left:893px;top:296px;width:1px;height:10px;background:#c0c0c0;"></div>
<div class="b" style="left:894px;top:296px;width:110px;height:9px;background:#fff;"></div>
<div class="b" style="left:894px;top:305px;width:111px;height:1px;background:#c0c0c0;"></div>
<div class="b" style="left:1004px;top:296px;width:1px;height:10px;background:#c0c0c0;"></div>
<div class="b" style="left:1005px;top:296px;width:110px;height:9px;background:#fff;"></div>
<div class="b" style="left:1005px;top:305px;width:111px;height:1px;background:#c0c0c0;"></div>
<div class="b" style="left:1115px;top:296px;width:1px;height:10px;background:#c0c0c0;"></div>
<div class="b" style="left:1116px;top:296px;width:110px;height:9px;background:#fff;"></div>
<div class="b" style="left:1116px;top:305px;width:111px;height:1px;background:#c0c0c0;"></div>
<div class="b" style="left:1226px;top:296px;width:1px;height:10px;background:#c0c0c0;"></div>
<div class="b" style="left:6px;top:306px;width:111px;height:10px;background:#d4d0c8;"></div>
<div class="b" style="left:6px;top:306px;width:110px;height:1px;background:#fff;"></div>
<div class="b" style="left:6px;top:306px;width:1px;height:9px;background:#fff;"></div>
<div class="b" style="left:6px;top:315px;width:111px;height:1px;background:#000;"></div>
<div class="b" style="left:116px;top:306px;width:1px;height:10px;background:#000;"></div>
<div class="b" style="left:6px;top:314px;width:110px;height:1px;background:#808080;"></div>
<div class="b" style="left:115px;top:306px;width:1px;height:9px;background:#808080;"></div>
<div class="b" style="left:117px;top:306px;width:110px;height:9px;background:#ffff00;"></div>
<div class="b" style="left:117px;top:315px;width:111px;height:1px;background:#c0c0c0;"></div>
<div class="b" style="left:227px;top:306px;width:1px;height:10px;background:#c0c0c0;"></div>
<div class="b" style="left:228px;top:306px;width:110px;height:9px;background:#fff;"></div>
<div class="b" style="left:228px;top:315px;width:111px;height:1px;background:#c0c0c0;"></div>
<div class="b" style="left:338px;top:306px;width:1px;height:10px;background:#c0c0c0;"></div>
<div class="b" style="left:339px;top:306px;width:110px;height:9px;background:#fff;"></div>
<div class="b" style="left:339px;top:315px;width:111px;height:1px;background:#c0c0c0;"></div>
<div class="b" style="left:449px;top:306px;width:1px;height:10px;background:#c0c0c0;"></div>
<div class="b" style="left:450px;top:306px;width:110px;height:9px;background:#fff;"></div>
<div class="b" style="left:450px;top:315px;width:111px;height:1px;background:#c0c0c0;"></div>
<div class="b" style="left:560px;top:306px;width:1px;height:10px;background:#c0c0c0;"></div>
<div class="b" style="left:561px;top:306px;width:110px;height:9px;background:#fff;"></div>
<div class="b" style="left:561px;top:315px;width:111px;height:1px;background:#c0c0c0;"></div>
<div class="b" style="left:671px;top:306px;width:1px;height:10px;background:#c0c0c0;"></div>
<div class="b" style="left:672px;top:306px;width:110px;height:9px;background:#ffff00;"></div>
<div class="b" style="left:672px;top:315px;width:111px;height:1px;background:#c0c0c0;"></div>
<div class="b" style="left:782px;top:306px;width:1px;height:10px;background:#c0c0c0;"></div>
<div class="b" style="left:783px;top:306px;width:110px;height:9px;background:#fff;"></div>
<div class="b" style="left:783px;top:315px;width:111px;height:1px;background:#c0c0c0;"></div>
<div class="b" style="left:893px;top:306px;width:1px;height:10px;background:#c0c0c0;"></div>
<div class="b" style="left:894px;top:306px;width:110px;height:9px;background:#fff;"></div>
<div class="b" style="left:894px;top:315px;width:111px;height:1px;background:#c0c0c0;"></div>
<div class="b" style="left:1004px;top:306px;width:1px;height:10px;background:#c0c0c0;"></div>
<div class="b" style="left:1005px;top:306px;width:110px;height:9px;background:#fff;"></div>
<div class="b" style="left:1005px;top:315px;width:111px;height:1px;background:#c0c0c0;"></div>
<div class="b" style="left:1115px;top:306px;width:1px;height:10px;background:#c0c0c0;"></div>
<div class="b" style="left:1116px;top:306px;width:110px;height:9px;background:#fff;"></div>
<div class="b" style="left:1116px;top:315px;width:111px;height:1px;background:#c0c0c0;"></div>
<div class="b" style="left:1226px;top:306px;width:1px;height:10px;background:#c0c0c0;"></div>
<div class="b" style="left:6px;top:316px;width:111px;height:10px;background:#d4d0c8;"></div>
<div class="b" style="left:6px;top:316px;width:110px;height:1px;background:#fff;"></div>
<div class="b" style="left:6px;top:316px;width:1px;height:9px;background:#fff;"></div>
<div class="b" style="left:6px;top:325px;width:111px;height:1px;background:#000;"></div>
<div class="b" style="left:116px;top:316px;width:1px;height:10px;background:#000;"></div>
<div class="b" style="left:6px;top:324px;width:110px;height:1px;background:#808080;"></div>
<div class="b" style="left:115px;top:316px;width:1px;height:9px;background:#808080;"></div>
<div class="b" style="left:117px;top:316px;width:110px;height:9px;background:#ffff00;"></div>
<div class="b" style="left:117px;top:325px;width:111px;height:1px;background:#c0c0c0;"></div>
<div class="b" style="left:227px;top:316px;width:1px;height:10px;background:#c0c0c0;"></div>
<div class="b" style="left:228px;top:316px;width:110px;height:9px;background:#fff;"></div>
<div class="b" style="left:228px;top:325px;width:111px;height:1px;background:#c0c0c0;"></div>
<div class="b" style="left:338px;top:316px;width:1px;height:10px;background:#c0c0c0;"></div>
<div class="b" style="left:339px;top:316px;width:110px;height:9px;background:#fff;"></div>
<div class="b" style="left:339px;top:325px;width:111px;height:1px;background:#c0c0c0;"></div>
<div class="b" style="left:449px;top:316px;width:1px;height:10px;background:#c0c0c0;"></div>
<div class="b" style="left:450px;top:316px;width:110px;height:9px;background:#fff;"></div>
<div class="b" style="left:450px;top:325px;width:111px;height:1px;background:#c0c0c0;"></div>
<div class="b" style="left:560px;top:316px;width:1px;height:10px;background:#c0c0c0;"></div>
<div class="b" style="left:561px;top:316px;width:110px;height:9px;background:#fff;"></div>
<div class="b" style="left:561px;top:325px;width:111px;height:1px;background:#c0c0c0;"></div>
<div class="b" style="left:671px;top:316px;width:1px;height:10px;background:#c0c0c0;"></div>
<div class="b" style="left:672px;top:316px;width:110px;height:9px;background:#ffff00;"></div>
<div class="b" style="left:672px;top:325px;width:111px;height:1px;background:#c0c0c0;"></div>
<div class="b" style="left:782px;top:316px;width:1px;height:10px;background:#c0c0c0;"></div>
<div class="b" style="left:783px;top:316px;width:110px;height:9px;background:#fff;"></div>
<div class="b" style="left:783px;top:325px;width:111px;height:1px;background:#c0c0c0;"></div>
<div class="b" style="left:893px;top:316px;width:1px;height:10px;background:#c0c0c0;"></div>
<div class="b" style="left:894px;top:316px;width:110px;height:9px;background:#fff;"></div>
<div class="b" style="left:894px;top:325px;width:111px;height:1px;background:#c0c0c0;"></div>
<div class="b" style="left:1004px;top:316px;width:1px;height:10px;background:#c0c0c0;"></div>
<div class="b" style="left:1005px;top:316px;width:110px;height:9px;background:#fff;"></div>
<div class="b" style="left:1005px;top:325px;width:111px;height:1px;background:#c0c0c0;"></div>
<div class="b" style="left:1115px;top:316px;width:1px;height:10px;background:#c0c0c0;"></div>
<div class="b" style="left:1116px;top:316px;width:110px;height:9px;background:#fff;"></div>
<div class="b" style="left:1116px;top:325px;width:111px;height:1px;background:#c0c0c0;"></div>
<div class="b" style="left:1226px;top:316px;width:1px;height:10px;background:#c0c0c0;"></div>
<div class="b" style="left:6px;top:326px;width:111px;height:10px;background:#d4d0c8;"></div>
<div class="b" style="left:6px;top:326px;width:110px;height:1px;background:#fff;"></div>
<div class="b" style="left:6px;top:326px;width:1px;height:9px;background:#fff;"></div>
<div class="b" style="left:6px;top:335px;width:111px;height:1px;background:#000;"></div>
<div class="b" style="left:116px;top:326px;width:1px;height:10px;background:#000;"></div>
<div class="b" style="left:6px;top:334px;width:110px;height:1px;background:#808080;"></div>
<div class="b" style="left:115px;top:326px;width:1px;height:9px;background:#808080;"></div>
<div class="b" style="left:117px;top:326px;width:110px;height:9px;background:#008080;"></div>
<div class="b" style="left:117px;top:335px;width:111px;height:1px;background:#c0c0c0;"></div>
<div class="b" style="left:227px;top:326px;width:1px;height:10px;background:#c0c0c0;"></div>
<div class="b" style="left:228px;top:326px;width:110px;height:9px;background:#008080;"></div>
<div class="b" style="left:228px;top:335px;width:111px;height:1px;background:#c0c0c0;"></div>
<div class="b" style="left:338px;top:326px;width:1px;height:10px;background:#c0c0c0;"></div>
<div class="b" style="left:339px;top:326px;width:110px;height:9px;background:#008080;"></div>
<div class="b" style="left:339px;top:335px;width:111px;height:1px;background:#c0c0c0;"></div>
<div class="b" style="left:449px;top:326px;width:1px;height:10px;background:#c0c0c0;"></div>
<div class="b" style="left:450px;top:326px;width:110px;height:9px;background:#008080;"></div>
<div class="b" style="left:450px;top:335px;width:111px;height:1px;background:#c0c0c0;"></div>
<div class="b" style="left:560px;top:326px;width:1px;height:10px;background:#c0c0c0;"></div>
<div class="b" style="left:561px;top:326px;width:110px;height:9px;background:#008080;"></div>
<div class="b" style="left:561px;top:335px;width:111px;height:1px;background:#c0c0c0;"></div>
<div class="b" style="left:671px;top:326px;width:1px;height:10px;background:#c0c0c0;"></div>
<div class="b" style="left:672px;top:326px;width:110px;height:9px;background:#008080;"></div>
<div class="b" style="left:672px;top:335px;width:111px;height:1px;background:#c0c0c0;"></div>
<div class="b" style="left:782px;top:326px;width:1px;height:10px;background:#c0c0c0;"></div>
<div class="b" style="left:783px;top:326px;width:110px;height:9px;background:#008080;"></div>
<div class="b" style="left:783px;top:335px;width:111px;height:1px;background:#c0c0c0;"></div>
<div class="b" style="left:893px;top:326px;width:1px;height:10px;background:#c0c0c0;"></div>
<div class="b" style="left:894px;top:326px;width:110px;height:9px;background:#008080;"></div>
<div class="b" style="left:894px;top:335px;width:111px;height:1px;background:#c0c0c0;"></div>
<div class="b" style="left:1004px;top:326px;width:1px;height:10px;background:#c0c0c0;"></div>
<div class="b" style="left:1005px;top:326px;width:110px;height:9px;background:#008080;"></div>
<div class="b" style="left:1005px;top:335px;width:111px;height:1px;background:#c0c0c0;"></div>
<div class="b" style="left:1115px;top:326px;width:1px;height:10px;background:#c0c0c0;"></div>
<div class="b" style="left:1116px;top:326px;width:110px;height:9px;background:#008080;"></div>
<div class="b" style="left:1116px;top:335px;width:111px;height:1px;background:#c0c0c0;"></div>
<div class="b" style="left:1226px;top:326px;width:1px;height:10px;background:#c0c0c0;"></div>
<div class="b" style="left:6px;top:336px;width:111px;height:10px;background:#d4d0c8;"></div>
<div class="b" style="left:6px;top:336px;width:110px;height:1px;background:#fff;"></div>
<div class="b" style="left:6px;top:336px;width:1px;height:9px;background:#fff;"></div>
<div class="b" style="left:6px;top:345px;width:111px;height:1px;background:#000;"></div>
<div class="b" style="left:116px;top:336px;width:1px;height:10px;background:#000;"></div>
<div class="b" style="left:6px;top:344px;width:110px;height:1px;background:#808080;"></div>
<div class="b" style="left:115px;top:336px;width:1px;height:9px;background:#808080;"></div>
<div class="b" style="left:117px;top:336px;width:110px;height:9px;background:#008080;"></div>
<div class="b" style="left:117px;top:345px;width:111px;height:1px;background:#c0c0c0;"></div>
<div class="b" style="left:227px;top:336px;width:1px;height:10px;background:#c0c0c0;"></div>
<div class="b" style="left:228px;top:336px;width:110px;height:9px;background:#008080;"></div>
<div class="b" style="left:228px;top:345px;width:111px;height:1px;background:#c0c0c0;"></div>
<div class="b" style="left:338px;top:336px;width:1px;height:10px;background:#c0c0c0;"></div>
<div class="b" style="left:339px;top:336px;width:110px;height:9px;background:#008080;"></div>
<div class="b" style="left:339px;top:345px;width:111px;height:1px;background:#c0c0c0;"></div>
<div class="b" style="left:449px;top:336px;width:1px;height:10px;background:#c0c0c0;"></div>
<div class="b" style="left:450px;top:336px;width:110px;height:9px;background:#008080;"></div>
<div class="b" style="left:450px;top:345px;width:111px;height:1px;background:#c0c0c0;"></div>
<div class="b" style="left:560px;top:336px;width:1px;height:10px;background:#c0c0c0;"></div>
<div class="b" style="left:561px;top:336px;width:110px;height:9px;background:#008080;"></div>
<div class="b" style="left:561px;top:345px;width:111px;height:1px;background:#c0c0c0;"></div>
<div class="b" style="left:671px;top:336px;width:1px;height:10px;background:#c0c0c0;"></div>
<div class="b" style="left:672px;top:336px;width:110px;height:9px;background:#008080;"></div>
<div class="b" style="left:672px;top:345px;width:111px;height:1px;background:#c0c0c0;"></div>
<div class="b" style="left:782px;top:336px;width:1px;height:10px;background:#c0c0c0;"></div>
<div class="b" style="left:783px;top:336px;width:110px;height:9px;background:#008080;"></div>
<div class="b" style="left:783px;top:345px;width:111px;height:1px;background:#c0c0c0;"></div>
<div class="b" style="left:893px;top:336px;width:1px;height:10px;background:#c0c0c0;"></div>
<div class="b" style="left:894px;top:336px;width:110px;height:9px;background:#008080;"></div>
<div class="b" style="left:894px;top:345px;width:111px;height:1px;background:#c0c0c0;"></div>
<div class="b" style="left:1004px;top:336px;width:1px;height:10px;background:#c0c0c0;"></div>
<div class="b" style="left:1005px;top:336px;width:110px;height:9px;background:#008080;"></div>
<div class="b" style="left:1005px;top:345px;width:111px;height:1px;background:#c0c0c0;"></div>
<div class="b" style="left:1115px;top:336px;width:1px;height:10px;background:#c0c0c0;"></div>
<div class="b" style="left:1116px;top:336px;width:110px;height:9px;background:#008080;"></div>
<div class="b" style="left:1116px;top:345px;width:111px;height:1px;background:#c0c0c0;"></div>
<div class="b" style="left:1226px;top:336px;width:1px;height:10px;background:#c0c0c0;"></div>
<div class="b" style="left:6px;top:346px;width:111px;height:10px;background:#d4d0c8;"></div>
<div class="b" style="left:6px;top:346px;width:110px;height:1px;background:#fff;"></div>
<div class="b" style="left:6px;top:346px;width:1px;height:9px;background:#fff;"></div>
<div class="b" style="left:6px;top:355px;width:111px;height:1px;background:#000;"></div>
<div class="b" style="left:116px;top:346px;width:1px;height:10px;background:#000;"></div>
<div class="b" style="left:6px;top:354px;width:110px;height:1px;background:#808080;"></div>
<div class="b" style="left:115px;top:346px;width:1px;height:9px;background:#808080;"></div>
<div class="b" style="left:117px;top:346px;width:110px;height:9px;background:#0000ff;"></div>
<div class="b" style="left:117px;top:355px;width:111px;height:1px;background:#c0c0c0;"></div>
<div class="b" style="left:227px;top:346px;width:1px;height:10px;background:#c0c0c0;"></div>
<div class="b" style="left:228px;top:346px;width:110px;height:9px;background:#0000ff;"></div>
<div class="b" style="left:228px;top:355px;width:111px;height:1px;background:#c0c0c0;"></div>
<div class="b" style="left:338px;top:346px;width:1px;height:10px;background:#c0c0c0;"></div>
<div class="b" style="left:339px;top:346px;width:110px;height:9px;background:#0000ff;"></div>
<div class="b" style="left:339px;top:355px;width:111px;height:1px;background:#c0c0c0;"></div>
<div class="b" style="left:449px;top:346px;width:1px;height:10px;background:#c0c0c0;"></div>
<div class="b" style="left:450px;top:346px;width:110px;height:9px;background:#0000ff;"></div>
<div class="b" style="left:450px;top:355px;width:111px;height:1px;background:#c0c0c0;"></div>
<div class="b" style="left:560px;top:346px;width:1px;height:10px;background:#c0c0c0;"></div>
<div class="b" style="left:561px;top:346px;width:110px;height:9px;background:#0000ff;"></div>
<div class="b" style="left:561px;top:355px;width:111px;height:1px;background:#c0c0c0;"></div>
<div class="b" style="left:671px;top:346px;width:1px;height:10px;background:#c0c0c0;"></div>
<div class="b" style="left:672px;top:346px;width:110px;height:9px;background:#0000ff;"></div>
<div class="b" style="left:672px;top:355px;width:111px;height:1px;background:#c0c0c0;"></div>
<div class="b" style="left:782px;top:346px;width:1px;height:10px;background:#c0c0c0;"></div>
<div class="b" style="left:783px;top:346px;width:110px;height:9px;background:#0000ff;"></div>
<div class="b" style="left:783px;top:355px;width:111px;height:1px;background:#c0c0c0;"></div>
<div class="b" style="left:893px;top:346px;width:1px;height:10px;background:#c0c0c0;"></div>
<div class="b" style="left:894px;top:346px;width:110px;height:9px;background:#0000ff;"></div>
<div class="b" style="left:894px;top:355px;width:111px;height:1px;background:#c0c0c0;"></div>
<div class="b" style="left:1004px;top:346px;width:1px;height:10px;background:#c0c0c0;"></div>
<div class="b" style="left:1005px;top:346px;width:110px;height:9px;background:#0000ff;"></div>
<div class="b" style="left:1005px;top:355px;width:111px;height:1px;background:#c0c0c0;"></div>
<div class="b" style="left:1115px;top:346px;width:1px;height:10px;background:#c0c0c0;"></div>
<div class="b" style="left:1116px;top:346px;width:110px;height:9px;background:#0000ff;"></div>
<div class="b" style="left:1116px;top:355px;width:111px;height:1px;background:#c0c0c0;"></div>
<div class="b" style="left:1226px;top:346px;width:1px;height:10px;background:#c0c0c0;"></div>
<div class="b" style="left:6px;top:356px;width:111px;height:10px;background:#d4d0c8;"></div>
<div class="b" style="left:6px;top:356px;width:110px;height:1px;background:#fff;"></div>
<div class="b" style="left:6px;top:356px;width:1px;height:9px;background:#fff;"></div>
<div class="b" style="left:6px;top:365px;width:111px;height:1px;background:#000;"></div>
<div class="b" style="left:116px;top:356px;width:1px;height:10px;background:#000;"></div>
<div class="b" style="left:6px;top:364px;width:110px;height:1px;background:#808080;"></div>
<div class="b" style="left:115px;top:356px;width:1px;height:9px;background:#808080;"></div>
<div class="b" style="left:117px;top:356px;width:110px;height:9px;background:#0000ff;"></div>
<div class="b" style="left:117px;top:365px;width:111px;height:1px;background:#c0c0c0;"></div>
<div class="b" style="left:227px;top:356px;width:1px;height:10px;background:#c0c0c0;"></div>
<div class="b" style="left:228px;top:356px;width:110px;height:9px;background:#0000ff;"></div>
<div class="b" style="left:228px;top:365px;width:111px;height:1px;background:#c0c0c0;"></div>
<div class="b" style="left:338px;top:356px;width:1px;height:10px;background:#c0c0c0;"></div>
<div class="b" style="left:339px;top:356px;width:110px;height:9px;background:#0000ff;"></div>
<div class="b" style="left:339px;top:365px;width:111px;height:1px;background:#c0c0c0;"></div>
<div class="b" style="left:449px;top:356px;width:1px;height:10px;background:#c0c0c0;"></div>
<div class="b" style="left:450px;top:356px;width:110px;height:9px;background:#0000ff;"></div>
<div class="b" style="left:450px;top:365px;width:111px;height:1px;background:#c0c0c0;"></div>
<div class="b" style="left:560px;top:356px;width:1px;height:10px;background:#c0c0c0;"></div>
<div class="b" style="left:561px;top:356px;width:110px;height:9px;background:#0000ff;"></div>
<div class="b" style="left:561px;top:365px;width:111px;height:1px;background:#c0c0c0;"></div>
<div class="b" style="left:671px;top:356px;width:1px;height:10px;background:#c0c0c0;"></div>
<div class="b" style="left:672px;top:356px;width:110px;height:9px;background:#0000ff;"></div>
<div class="b" style="left:672px;top:365px;width:111px;height:1px;background:#c0c0c0;"></div>
<div class="b" style="left:782px;top:356px;width:1px;height:10px;background:#c0c0c0;"></div>
<div class="b" style="left:783px;top:356px;width:110px;height:9px;background:#0000ff;"></div>
<div class="b" style="left:783px;top:365px;width:111px;height:1px;background:#c0c0c0;"></div>
<div class="b" style="left:893px;top:356px;width:1px;height:10px;background:#c0c0c0;"></div>
<div class="b" style="left:894px;top:356px;width:110px;height:9px;background:#0000ff;"></div>
<div class="b" style="left:894px;top:365px;width:111px;height:1px;background:#c0c0c0;"></div>
<div class="b" style="left:1004px;top:356px;width:1px;height:10px;background:#c0c0c0;"></div>
<div class="b" style="left:1005px;top:356px;width:110px;height:9px;background:#0000ff;"></div>
<div class="b" style="left:1005px;top:365px;width:111px;height:1px;background:#c0c0c0;"></div>
<div class="b" style="left:1115px;top:356px;width:1px;height:10px;background:#c0c0c0;"></div>
<div class="b" style="left:1116px;top:356px;width:110px;height:9px;background:#0000ff;"></div>
<div class="b" style="left:1116px;top:365px;width:111px;height:1px;background:#c0c0c0;"></div>
<div class="b" style="left:1226px;top:356px;width:1px;height:10px;background:#c0c0c0;"></div>
<div class="b" style="left:117px;top:256px;width:1110px;height:110px;overflow:hidden">
<div style="position:absolute;left:-92px;width:200px;top:0px;height:9px;overflow:hidden"><div class="t" style="right:0;top:-4.2px;font-size:15px;line-height:15px;color:#fff;transform:scaleX(0.73);transform-origin:right top">1922</div></div>
<div style="position:absolute;left:-92px;width:200px;top:10px;height:9px;overflow:hidden"><div class="t" style="right:0;top:-4.2px;font-size:15px;line-height:15px;color:#000;transform:scaleX(0.73);transform-origin:right top">727</div></div>
<div style="position:absolute;left:-92px;width:200px;top:20px;height:9px;overflow:hidden"><div class="t" style="right:0;top:-4.2px;font-size:15px;line-height:15px;color:#000;transform:scaleX(0.73);transform-origin:right top">-305</div></div>
<div style="position:absolute;left:-92px;width:200px;top:30px;height:9px;overflow:hidden"><div class="t" style="right:0;top:-4.2px;font-size:15px;line-height:15px;color:#000;transform:scaleX(0.73);transform-origin:right top">-874</div></div>
<div style="position:absolute;left:-92px;width:200px;top:40px;height:9px;overflow:hidden"><div class="t" style="right:0;top:-4.2px;font-size:15px;line-height:15px;color:#000;transform:scaleX(0.73);transform-origin:right top">-960</div></div>
<div style="position:absolute;left:-92px;width:200px;top:50px;height:9px;overflow:hidden"><div class="t" style="right:0;top:-4.2px;font-size:15px;line-height:15px;color:#000;transform:scaleX(0.73);transform-origin:right top">-921</div></div>
<div style="position:absolute;left:-92px;width:200px;top:60px;height:9px;overflow:hidden"><div class="t" style="right:0;top:-4.2px;font-size:15px;line-height:15px;color:#000;transform:scaleX(0.73);transform-origin:right top">-525</div></div>
<div style="position:absolute;left:-92px;width:200px;top:70px;height:9px;overflow:hidden"><div class="t" style="right:0;top:-4.2px;font-size:15px;line-height:15px;color:#fff;transform:scaleX(0.73);transform-origin:right top">1936</div></div>
<div style="position:absolute;left:-92px;width:200px;top:90px;height:9px;overflow:hidden"><div class="t" style="right:0;top:-4.2px;font-size:15px;line-height:15px;color:#fff;transform:scaleX(0.73);transform-origin:right top">1922</div></div>
<div style="position:absolute;left:19px;width:200px;top:0px;height:9px;overflow:hidden"><div class="t" style="right:0;top:-4.2px;font-size:15px;line-height:15px;color:#000;transform:scaleX(0.73);transform-origin:right top">65</div></div>
<div style="position:absolute;left:19px;width:200px;top:10px;height:9px;overflow:hidden"><div class="t" style="right:0;top:-4.2px;font-size:15px;line-height:15px;color:#000;transform:scaleX(0.73);transform-origin:right top">10</div></div>
<div style="position:absolute;left:19px;width:200px;top:20px;height:9px;overflow:hidden"><div class="t" style="right:0;top:-4.2px;font-size:15px;line-height:15px;color:#000;transform:scaleX(0.73);transform-origin:right top">5</div></div>
<div style="position:absolute;left:19px;width:200px;top:30px;height:9px;overflow:hidden"><div class="t" style="right:0;top:-4.2px;font-size:15px;line-height:15px;color:#000;transform:scaleX(0.73);transform-origin:right top">24</div></div>
<div style="position:absolute;left:19px;width:200px;top:40px;height:9px;overflow:hidden"><div class="t" style="right:0;top:-4.2px;font-size:15px;line-height:15px;color:#000;transform:scaleX(0.73);transform-origin:right top">18</div></div>
<div style="position:absolute;left:19px;width:200px;top:50px;height:9px;overflow:hidden"><div class="t" style="right:0;top:-4.2px;font-size:15px;line-height:15px;color:#000;transform:scaleX(0.73);transform-origin:right top">13</div></div>
<div style="position:absolute;left:19px;width:200px;top:60px;height:9px;overflow:hidden"><div class="t" style="right:0;top:-4.2px;font-size:15px;line-height:15px;color:#000;transform:scaleX(0.73);transform-origin:right top">29</div></div>
<div style="position:absolute;left:19px;width:200px;top:70px;height:9px;overflow:hidden"><div class="t" style="right:0;top:-4.2px;font-size:15px;line-height:15px;color:#fff;transform:scaleX(0.73);transform-origin:right top">63</div></div>
<div style="position:absolute;left:19px;width:200px;top:80px;height:9px;overflow:hidden"><div class="t" style="right:0;top:-4.2px;font-size:15px;line-height:15px;color:#fff;transform:scaleX(0.73);transform-origin:right top">36.00</div></div>
<div style="position:absolute;left:19px;width:200px;top:90px;height:9px;overflow:hidden"><div class="t" style="right:0;top:-4.2px;font-size:15px;line-height:15px;color:#fff;transform:scaleX(0.73);transform-origin:right top">65</div></div>
<div style="position:absolute;left:19px;width:200px;top:100px;height:9px;overflow:hidden"><div class="t" style="right:0;top:-4.2px;font-size:15px;line-height:15px;color:#fff;transform:scaleX(0.73);transform-origin:right top">35.00</div></div>
<div style="position:absolute;left:130px;width:200px;top:0px;height:9px;overflow:hidden"><div class="t" style="right:0;top:-4.2px;font-size:15px;line-height:15px;color:#000;transform:scaleX(0.73);transform-origin:right top">53</div></div>
<div style="position:absolute;left:130px;width:200px;top:10px;height:9px;overflow:hidden"><div class="t" style="right:0;top:-4.2px;font-size:15px;line-height:15px;color:#000;transform:scaleX(0.73);transform-origin:right top">9</div></div>
<div style="position:absolute;left:130px;width:200px;top:20px;height:9px;overflow:hidden"><div class="t" style="right:0;top:-4.2px;font-size:15px;line-height:15px;color:#000;transform:scaleX(0.73);transform-origin:right top">4</div></div>
<div style="position:absolute;left:130px;width:200px;top:30px;height:9px;overflow:hidden"><div class="t" style="right:0;top:-4.2px;font-size:15px;line-height:15px;color:#000;transform:scaleX(0.73);transform-origin:right top">20</div></div>
<div style="position:absolute;left:130px;width:200px;top:40px;height:9px;overflow:hidden"><div class="t" style="right:0;top:-4.2px;font-size:15px;line-height:15px;color:#000;transform:scaleX(0.73);transform-origin:right top">15</div></div>
<div style="position:absolute;left:130px;width:200px;top:50px;height:9px;overflow:hidden"><div class="t" style="right:0;top:-4.2px;font-size:15px;line-height:15px;color:#000;transform:scaleX(0.73);transform-origin:right top">11</div></div>
<div style="position:absolute;left:130px;width:200px;top:60px;height:9px;overflow:hidden"><div class="t" style="right:0;top:-4.2px;font-size:15px;line-height:15px;color:#000;transform:scaleX(0.73);transform-origin:right top">25</div></div>
<div style="position:absolute;left:130px;width:200px;top:70px;height:9px;overflow:hidden"><div class="t" style="right:0;top:-4.2px;font-size:15px;line-height:15px;color:#fff;transform:scaleX(0.73);transform-origin:right top">51</div></div>
<div style="position:absolute;left:130px;width:200px;top:90px;height:9px;overflow:hidden"><div class="t" style="right:0;top:-4.2px;font-size:15px;line-height:15px;color:#fff;transform:scaleX(0.73);transform-origin:right top">53</div></div>
<div style="position:absolute;left:241px;width:200px;top:0px;height:9px;overflow:hidden"><div class="t" style="right:0;top:-4.2px;font-size:15px;line-height:15px;color:#000;transform:scaleX(0.73);transform-origin:right top">2970</div></div>
<div style="position:absolute;left:241px;width:200px;top:10px;height:9px;overflow:hidden"><div class="t" style="right:0;top:-4.2px;font-size:15px;line-height:15px;color:#000;transform:scaleX(0.73);transform-origin:right top">7450</div></div>
<div style="position:absolute;left:241px;width:200px;top:20px;height:9px;overflow:hidden"><div class="t" style="right:0;top:-4.2px;font-size:15px;line-height:15px;color:#000;transform:scaleX(0.73);transform-origin:right top">-6430</div></div>
<div style="position:absolute;left:241px;width:200px;top:30px;height:9px;overflow:hidden"><div class="t" style="right:0;top:-4.2px;font-size:15px;line-height:15px;color:#000;transform:scaleX(0.73);transform-origin:right top">-3660</div></div>
<div style="position:absolute;left:241px;width:200px;top:40px;height:9px;overflow:hidden"><div class="t" style="right:0;top:-4.2px;font-size:15px;line-height:15px;color:#000;transform:scaleX(0.73);transform-origin:right top">-5340</div></div>
<div style="position:absolute;left:241px;width:200px;top:50px;height:9px;overflow:hidden"><div class="t" style="right:0;top:-4.2px;font-size:15px;line-height:15px;color:#000;transform:scaleX(0.73);transform-origin:right top">-7020</div></div>
<div style="position:absolute;left:241px;width:200px;top:60px;height:9px;overflow:hidden"><div class="t" style="right:0;top:-4.2px;font-size:15px;line-height:15px;color:#000;transform:scaleX(0.73);transform-origin:right top">-1790</div></div>
<div style="position:absolute;left:241px;width:200px;top:70px;height:9px;overflow:hidden"><div class="t" style="right:0;top:-4.2px;font-size:15px;line-height:15px;color:#fff;transform:scaleX(0.73);transform-origin:right top">3094</div></div>
<div style="position:absolute;left:241px;width:200px;top:90px;height:9px;overflow:hidden"><div class="t" style="right:0;top:-4.2px;font-size:15px;line-height:15px;color:#fff;transform:scaleX(0.73);transform-origin:right top">2970</div></div>
<div style="position:absolute;left:352px;width:200px;top:0px;height:9px;overflow:hidden"><div class="t" style="right:0;top:-4.2px;font-size:15px;line-height:15px;color:#000;transform:scaleX(0.73);transform-origin:right top">3650</div></div>
<div style="position:absolute;left:352px;width:200px;top:10px;height:9px;overflow:hidden"><div class="t" style="right:0;top:-4.2px;font-size:15px;line-height:15px;color:#000;transform:scaleX(0.73);transform-origin:right top">8370</div></div>
<div style="position:absolute;left:352px;width:200px;top:20px;height:9px;overflow:hidden"><div class="t" style="right:0;top:-4.2px;font-size:15px;line-height:15px;color:#000;transform:scaleX(0.73);transform-origin:right top">-7170</div></div>
<div style="position:absolute;left:352px;width:200px;top:30px;height:9px;overflow:hidden"><div class="t" style="right:0;top:-4.2px;font-size:15px;line-height:15px;color:#000;transform:scaleX(0.73);transform-origin:right top">-4480</div></div>
<div style="position:absolute;left:352px;width:200px;top:40px;height:9px;overflow:hidden"><div class="t" style="right:0;top:-4.2px;font-size:15px;line-height:15px;color:#000;transform:scaleX(0.73);transform-origin:right top">-6255</div></div>
<div style="position:absolute;left:352px;width:200px;top:50px;height:9px;overflow:hidden"><div class="t" style="right:0;top:-4.2px;font-size:15px;line-height:15px;color:#000;transform:scaleX(0.73);transform-origin:right top">-8030</div></div>
<div style="position:absolute;left:352px;width:200px;top:60px;height:9px;overflow:hidden"><div class="t" style="right:0;top:-4.2px;font-size:15px;line-height:15px;color:#000;transform:scaleX(0.73);transform-origin:right top">-2110</div></div>
<div style="position:absolute;left:352px;width:200px;top:70px;height:9px;overflow:hidden"><div class="t" style="right:0;top:-4.2px;font-size:15px;line-height:15px;color:#fff;transform:scaleX(0.73);transform-origin:right top">3781</div></div>
<div style="position:absolute;left:352px;width:200px;top:90px;height:9px;overflow:hidden"><div class="t" style="right:0;top:-4.2px;font-size:15px;line-height:15px;color:#fff;transform:scaleX(0.73);transform-origin:right top">3650</div></div>
<div style="position:absolute;left:463px;width:200px;top:0px;height:9px;overflow:hidden"><div class="t" style="right:0;top:-4.2px;font-size:15px;line-height:15px;color:#000;transform:scaleX(0.73);transform-origin:right top">25197</div></div>
<div style="position:absolute;left:463px;width:200px;top:10px;height:9px;overflow:hidden"><div class="t" style="right:0;top:-4.2px;font-size:15px;line-height:15px;color:#000;transform:scaleX(0.73);transform-origin:right top">66923</div></div>
<div style="position:absolute;left:463px;width:200px;top:20px;height:9px;overflow:hidden"><div class="t" style="right:0;top:-4.2px;font-size:15px;line-height:15px;color:#000;transform:scaleX(0.73);transform-origin:right top">72470</div></div>
<div style="position:absolute;left:463px;width:200px;top:30px;height:9px;overflow:hidden"><div class="t" style="right:0;top:-4.2px;font-size:15px;line-height:15px;color:#000;transform:scaleX(0.73);transform-origin:right top">54018</div></div>
<div style="position:absolute;left:463px;width:200px;top:40px;height:9px;overflow:hidden"><div class="t" style="right:0;top:-4.2px;font-size:15px;line-height:15px;color:#000;transform:scaleX(0.73);transform-origin:right top">40516</div></div>
<div style="position:absolute;left:463px;width:200px;top:50px;height:9px;overflow:hidden"><div class="t" style="right:0;top:-4.2px;font-size:15px;line-height:15px;color:#000;transform:scaleX(0.73);transform-origin:right top">25743</div></div>
<div style="position:absolute;left:463px;width:200px;top:60px;height:9px;overflow:hidden"><div class="t" style="right:0;top:-4.2px;font-size:15px;line-height:15px;color:#000;transform:scaleX(0.73);transform-origin:right top">2384</div></div>
<div style="position:absolute;left:463px;width:200px;top:70px;height:9px;overflow:hidden"><div class="t" style="right:0;top:-4.2px;font-size:15px;line-height:15px;color:#fff;transform:scaleX(0.73);transform-origin:right top">74400</div></div>
<div style="position:absolute;left:463px;width:200px;top:90px;height:9px;overflow:hidden"><div class="t" style="right:0;top:-4.2px;font-size:15px;line-height:15px;color:#fff;transform:scaleX(0.73);transform-origin:right top">74400</div></div>
<div style="position:absolute;left:574px;width:200px;top:0px;height:9px;overflow:hidden"><div class="t" style="right:0;top:-4.2px;font-size:15px;line-height:15px;color:#000;transform:scaleX(0.73);transform-origin:right top">40</div></div>
<div style="position:absolute;left:574px;width:200px;top:10px;height:9px;overflow:hidden"><div class="t" style="right:0;top:-4.2px;font-size:15px;line-height:15px;color:#000;transform:scaleX(0.73);transform-origin:right top">47</div></div>
<div style="position:absolute;left:574px;width:200px;top:20px;height:9px;overflow:hidden"><div class="t" style="right:0;top:-4.2px;font-size:15px;line-height:15px;color:#000;transform:scaleX(0.73);transform-origin:right top">51</div></div>
<div style="position:absolute;left:574px;width:200px;top:30px;height:9px;overflow:hidden"><div class="t" style="right:0;top:-4.2px;font-size:15px;line-height:15px;color:#000;transform:scaleX(0.73);transform-origin:right top">38</div></div>
<div style="position:absolute;left:574px;width:200px;top:40px;height:9px;overflow:hidden"><div class="t" style="right:0;top:-4.2px;font-size:15px;line-height:15px;color:#000;transform:scaleX(0.73);transform-origin:right top">29</div></div>
<div style="position:absolute;left:574px;width:200px;top:50px;height:9px;overflow:hidden"><div class="t" style="right:0;top:-4.2px;font-size:15px;line-height:15px;color:#000;transform:scaleX(0.73);transform-origin:right top">31</div></div>
<div style="position:absolute;left:574px;width:200px;top:60px;height:9px;overflow:hidden"><div class="t" style="right:0;top:-4.2px;font-size:15px;line-height:15px;color:#000;transform:scaleX(0.73);transform-origin:right top">7</div></div>
<div style="position:absolute;left:574px;width:200px;top:70px;height:9px;overflow:hidden"><div class="t" style="right:0;top:-4.2px;font-size:15px;line-height:15px;color:#fff;transform:scaleX(0.73);transform-origin:right top">53</div></div>
<div style="position:absolute;left:574px;width:200px;top:80px;height:9px;overflow:hidden"><div class="t" style="right:0;top:-4.2px;font-size:15px;line-height:15px;color:#fff;transform:scaleX(0.73);transform-origin:right top">94.00</div></div>
<div style="position:absolute;left:574px;width:200px;top:90px;height:9px;overflow:hidden"><div class="t" style="right:0;top:-4.2px;font-size:15px;line-height:15px;color:#fff;transform:scaleX(0.73);transform-origin:right top">53</div></div>
<div style="position:absolute;left:574px;width:200px;top:100px;height:9px;overflow:hidden"><div class="t" style="right:0;top:-4.2px;font-size:15px;line-height:15px;color:#fff;transform:scaleX(0.73);transform-origin:right top">94.00</div></div>
<div style="position:absolute;left:685px;width:200px;top:0px;height:9px;overflow:hidden"><div class="t" style="right:0;top:-4.2px;font-size:15px;line-height:15px;color:#000;transform:scaleX(0.73);transform-origin:right top">26</div></div>
<div style="position:absolute;left:685px;width:200px;top:10px;height:9px;overflow:hidden"><div class="t" style="right:0;top:-4.2px;font-size:15px;line-height:15px;color:#000;transform:scaleX(0.73);transform-origin:right top">28</div></div>
<div style="position:absolute;left:685px;width:200px;top:20px;height:9px;overflow:hidden"><div class="t" style="right:0;top:-4.2px;font-size:15px;line-height:15px;color:#000;transform:scaleX(0.73);transform-origin:right top">30</div></div>
<div style="position:absolute;left:685px;width:200px;top:30px;height:9px;overflow:hidden"><div class="t" style="right:0;top:-4.2px;font-size:15px;line-height:15px;color:#000;transform:scaleX(0.73);transform-origin:right top">22</div></div>
<div style="position:absolute;left:685px;width:200px;top:40px;height:9px;overflow:hidden"><div class="t" style="right:0;top:-4.2px;font-size:15px;line-height:15px;color:#000;transform:scaleX(0.73);transform-origin:right top">17</div></div>
<div style="position:absolute;left:685px;width:200px;top:50px;height:9px;overflow:hidden"><div class="t" style="right:0;top:-4.2px;font-size:15px;line-height:15px;color:#000;transform:scaleX(0.73);transform-origin:right top">18</div></div>
<div style="position:absolute;left:685px;width:200px;top:60px;height:9px;overflow:hidden"><div class="t" style="right:0;top:-4.2px;font-size:15px;line-height:15px;color:#000;transform:scaleX(0.73);transform-origin:right top">5</div></div>
<div style="position:absolute;left:685px;width:200px;top:70px;height:9px;overflow:hidden"><div class="t" style="right:0;top:-4.2px;font-size:15px;line-height:15px;color:#fff;transform:scaleX(0.73);transform-origin:right top">31</div></div>
<div style="position:absolute;left:685px;width:200px;top:90px;height:9px;overflow:hidden"><div class="t" style="right:0;top:-4.2px;font-size:15px;line-height:15px;color:#fff;transform:scaleX(0.73);transform-origin:right top">31</div></div>
<div style="position:absolute;left:796px;width:200px;top:0px;height:9px;overflow:hidden"><div class="t" style="right:0;top:-4.2px;font-size:15px;line-height:15px;color:#000;transform:scaleX(0.73);transform-origin:right top">62798</div></div>
<div style="position:absolute;left:796px;width:200px;top:10px;height:9px;overflow:hidden"><div class="t" style="right:0;top:-4.2px;font-size:15px;line-height:15px;color:#000;transform:scaleX(0.73);transform-origin:right top">141488</div></div>
<div style="position:absolute;left:796px;width:200px;top:20px;height:9px;overflow:hidden"><div class="t" style="right:0;top:-4.2px;font-size:15px;line-height:15px;color:#000;transform:scaleX(0.73);transform-origin:right top">141488</div></div>
<div style="position:absolute;left:796px;width:200px;top:30px;height:9px;overflow:hidden"><div class="t" style="right:0;top:-4.2px;font-size:15px;line-height:15px;color:#000;transform:scaleX(0.73);transform-origin:right top">141488</div></div>
<div style="position:absolute;left:796px;width:200px;top:40px;height:9px;overflow:hidden"><div class="t" style="right:0;top:-4.2px;font-size:15px;line-height:15px;color:#000;transform:scaleX(0.73);transform-origin:right top">141488</div></div>
<div style="position:absolute;left:796px;width:200px;top:50px;height:9px;overflow:hidden"><div class="t" style="right:0;top:-4.2px;font-size:15px;line-height:15px;color:#000;transform:scaleX(0.73);transform-origin:right top">84176</div></div>
<div style="position:absolute;left:796px;width:200px;top:60px;height:9px;overflow:hidden"><div class="t" style="right:0;top:-4.2px;font-size:15px;line-height:15px;color:#000;transform:scaleX(0.73);transform-origin:right top">35823</div></div>
<div style="position:absolute;left:796px;width:200px;top:70px;height:9px;overflow:hidden"><div class="t" style="right:0;top:-4.2px;font-size:15px;line-height:15px;color:#fff;transform:scaleX(0.73);transform-origin:right top">141488</div></div>
<div style="position:absolute;left:796px;width:200px;top:90px;height:9px;overflow:hidden"><div class="t" style="right:0;top:-4.2px;font-size:15px;line-height:15px;color:#fff;transform:scaleX(0.73);transform-origin:right top">141488</div></div>
<div style="position:absolute;left:907px;width:200px;top:0px;height:9px;overflow:hidden"><div class="t" style="right:0;top:-4.2px;font-size:15px;line-height:15px;color:#000;transform:scaleX(0.73);transform-origin:right top">96771</div></div>
<div style="position:absolute;left:907px;width:200px;top:10px;height:9px;overflow:hidden"><div class="t" style="right:0;top:-4.2px;font-size:15px;line-height:15px;color:#000;transform:scaleX(0.73);transform-origin:right top">242357</div></div>
<div style="position:absolute;left:907px;width:200px;top:20px;height:9px;overflow:hidden"><div class="t" style="right:0;top:-4.2px;font-size:15px;line-height:15px;color:#000;transform:scaleX(0.73);transform-origin:right top">242357</div></div>
<div style="position:absolute;left:907px;width:200px;top:30px;height:9px;overflow:hidden"><div class="t" style="right:0;top:-4.2px;font-size:15px;line-height:15px;color:#000;transform:scaleX(0.73);transform-origin:right top">242357</div></div>
<div style="position:absolute;left:907px;width:200px;top:40px;height:9px;overflow:hidden"><div class="t" style="right:0;top:-4.2px;font-size:15px;line-height:15px;color:#000;transform:scaleX(0.73);transform-origin:right top">242357</div></div>
<div style="position:absolute;left:907px;width:200px;top:50px;height:9px;overflow:hidden"><div class="t" style="right:0;top:-4.2px;font-size:15px;line-height:15px;color:#000;transform:scaleX(0.73);transform-origin:right top">145287</div></div>
<div style="position:absolute;left:907px;width:200px;top:60px;height:9px;overflow:hidden"><div class="t" style="right:0;top:-4.2px;font-size:15px;line-height:15px;color:#000;transform:scaleX(0.73);transform-origin:right top">49806</div></div>
<div style="position:absolute;left:907px;width:200px;top:70px;height:9px;overflow:hidden"><div class="t" style="right:0;top:-4.2px;font-size:15px;line-height:15px;color:#fff;transform:scaleX(0.73);transform-origin:right top">242357</div></div>
<div style="position:absolute;left:907px;width:200px;top:90px;height:9px;overflow:hidden"><div class="t" style="right:0;top:-4.2px;font-size:15px;line-height:15px;color:#fff;transform:scaleX(0.73);transform-origin:right top">242357</div></div>
</div>
<div class="b" style="left:192.5px;top:226px;width:300px;height:9px;text-align:center;overflow:hidden"><span style="display:inline-block;background:#d4d0c8;height:9px;padding:0 0px;position:relative"><span style="position:relative;top:-1.13px;font-family:'Liberation Serif', serif;font-weight:bold;font-size:11.5px;line-height:11.5px;white-space:pre;display:block">SHEAR_FORCE</span></span></div>
<div class="b" style="left:746px;top:226px;width:300px;height:9px;text-align:center;overflow:hidden"><span style="display:inline-block;background:#d4d0c8;height:9px;padding:0 0px;position:relative"><span style="position:relative;top:-0.71px;font-family:'Liberation Serif', serif;font-weight:bold;font-size:11px;line-height:11px;white-space:pre;display:block">BENDING_MOMENT</span></span></div>
<div class="b" style="left:22px;top:235px;width:300px;height:11px;text-align:center;overflow:hidden"><span style="display:inline-block;background:#d4d0c8;height:11px;padding:0 0px;position:relative"><span style="position:relative;top:0.29px;font-family:'Liberation Serif', serif;font-weight:bold;font-size:11px;line-height:11px;white-space:pre;display:block">ACTUAL</span></span></div>
<div class="b" style="left:22px;top:246px;width:300px;height:10px;text-align:center;overflow:hidden"><span style="display:inline-block;background:#d4d0c8;height:10px;padding:0 0px;position:relative"><span style="position:relative;top:-0.71px;font-family:'Liberation Serif', serif;font-weight:bold;font-size:11px;line-height:11px;white-space:pre;display:block">( Mt )</span></span></div>
<div class="b" style="left:577.5px;top:235px;width:300px;height:11px;text-align:center;overflow:hidden"><span style="display:inline-block;background:#d4d0c8;height:11px;padding:0 0px;position:relative"><span style="position:relative;top:0.29px;font-family:'Liberation Serif', serif;font-weight:bold;font-size:11px;line-height:11px;white-space:pre;display:block">ACTUAL</span></span></div>
<div class="b" style="left:583.5px;top:246px;width:300px;height:10px;text-align:center;overflow:hidden"><span style="display:inline-block;background:#d4d0c8;height:10px;padding:0 0px;position:relative"><span style="position:relative;top:-0.71px;font-family:'Liberation Serif', serif;font-weight:bold;font-size:11px;line-height:11px;white-space:pre;display:block">( Mt-m )</span></span></div>
<div class="b" style="left:133px;top:235px;width:300px;height:11px;text-align:center;overflow:hidden"><span style="display:inline-block;background:#d4d0c8;height:11px;padding:0 0px;position:relative"><span style="position:relative;top:0.29px;font-family:'Liberation Serif', serif;font-weight:bold;font-size:11px;line-height:11px;white-space:pre;display:block">ALLOW</span></span></div>
<div class="b" style="left:133px;top:245px;width:300px;height:11px;text-align:center;overflow:hidden"><span style="display:inline-block;background:#d4d0c8;height:11px;padding:0 0px;position:relative"><span style="position:relative;top:0.29px;font-family:'Liberation Serif', serif;font-weight:bold;font-size:11px;line-height:11px;white-space:pre;display:block">SEA</span></span></div>
<div class="b" style="left:244px;top:235px;width:300px;height:11px;text-align:center;overflow:hidden"><span style="display:inline-block;background:#d4d0c8;height:11px;padding:0 0px;position:relative"><span style="position:relative;top:0.29px;font-family:'Liberation Serif', serif;font-weight:bold;font-size:11px;line-height:11px;white-space:pre;display:block">( % )</span></span></div>
<div class="b" style="left:244px;top:245px;width:300px;height:11px;text-align:center;overflow:hidden"><span style="display:inline-block;background:#d4d0c8;height:11px;padding:0 0px;position:relative"><span style="position:relative;top:0.29px;font-family:'Liberation Serif', serif;font-weight:bold;font-size:11px;line-height:11px;white-space:pre;display:block">PORT</span></span></div>
<div class="b" style="left:355px;top:235px;width:300px;height:11px;text-align:center;overflow:hidden"><span style="display:inline-block;background:#d4d0c8;height:11px;padding:0 0px;position:relative"><span style="position:relative;top:0.29px;font-family:'Liberation Serif', serif;font-weight:bold;font-size:11px;line-height:11px;white-space:pre;display:block">ALLOW</span></span></div>
<div class="b" style="left:355px;top:245px;width:300px;height:11px;text-align:center;overflow:hidden"><span style="display:inline-block;background:#d4d0c8;height:11px;padding:0 0px;position:relative"><span style="position:relative;top:0.29px;font-family:'Liberation Serif', serif;font-weight:bold;font-size:11px;line-height:11px;white-space:pre;display:block">SEA</span></span></div>
<div class="b" style="left:466px;top:235px;width:300px;height:11px;text-align:center;overflow:hidden"><span style="display:inline-block;background:#d4d0c8;height:11px;padding:0 0px;position:relative"><span style="position:relative;top:0.29px;font-family:'Liberation Serif', serif;font-weight:bold;font-size:11px;line-height:11px;white-space:pre;display:block">( Mt )</span></span></div>
<div class="b" style="left:466px;top:245px;width:300px;height:11px;text-align:center;overflow:hidden"><span style="display:inline-block;background:#d4d0c8;height:11px;padding:0 0px;position:relative"><span style="position:relative;top:0.29px;font-family:'Liberation Serif', serif;font-weight:bold;font-size:11px;line-height:11px;white-space:pre;display:block">PORT</span></span></div>
<div class="b" style="left:688px;top:235px;width:300px;height:11px;text-align:center;overflow:hidden"><span style="display:inline-block;background:#d4d0c8;height:11px;padding:0 0px;position:relative"><span style="position:relative;top:0.29px;font-family:'Liberation Serif', serif;font-weight:bold;font-size:11px;line-height:11px;white-space:pre;display:block">ALLOW</span></span></div>
<div class="b" style="left:688px;top:245px;width:300px;height:11px;text-align:center;overflow:hidden"><span style="display:inline-block;background:#d4d0c8;height:11px;padding:0 0px;position:relative"><span style="position:relative;top:0.29px;font-family:'Liberation Serif', serif;font-weight:bold;font-size:11px;line-height:11px;white-space:pre;display:block">SEA</span></span></div>
<div class="b" style="left:799px;top:235px;width:300px;height:11px;text-align:center;overflow:hidden"><span style="display:inline-block;background:#d4d0c8;height:11px;padding:0 0px;position:relative"><span style="position:relative;top:0.29px;font-family:'Liberation Serif', serif;font-weight:bold;font-size:11px;line-height:11px;white-space:pre;display:block">( % )</span></span></div>
<div class="b" style="left:799px;top:245px;width:300px;height:11px;text-align:center;overflow:hidden"><span style="display:inline-block;background:#d4d0c8;height:11px;padding:0 0px;position:relative"><span style="position:relative;top:0.29px;font-family:'Liberation Serif', serif;font-weight:bold;font-size:11px;line-height:11px;white-space:pre;display:block">PORT</span></span></div>
<div class="b" style="left:910px;top:235px;width:300px;height:11px;text-align:center;overflow:hidden"><span style="display:inline-block;background:#d4d0c8;height:11px;padding:0 0px;position:relative"><span style="position:relative;top:0.29px;font-family:'Liberation Serif', serif;font-weight:bold;font-size:11px;line-height:11px;white-space:pre;display:block">ALLOW</span></span></div>
<div class="b" style="left:910px;top:245px;width:300px;height:11px;text-align:center;overflow:hidden"><span style="display:inline-block;background:#d4d0c8;height:11px;padding:0 0px;position:relative"><span style="position:relative;top:0.29px;font-family:'Liberation Serif', serif;font-weight:bold;font-size:11px;line-height:11px;white-space:pre;display:block">SEA</span></span></div>
<div class="b" style="left:1021px;top:235px;width:300px;height:11px;text-align:center;overflow:hidden"><span style="display:inline-block;background:#d4d0c8;height:11px;padding:0 0px;position:relative"><span style="position:relative;top:0.29px;font-family:'Liberation Serif', serif;font-weight:bold;font-size:11px;line-height:11px;white-space:pre;display:block">( Mt-m )</span></span></div>
<div class="b" style="left:1021px;top:245px;width:300px;height:11px;text-align:center;overflow:hidden"><span style="display:inline-block;background:#d4d0c8;height:11px;padding:0 0px;position:relative"><span style="position:relative;top:0.29px;font-family:'Liberation Serif', serif;font-weight:bold;font-size:11px;line-height:11px;white-space:pre;display:block">PORT</span></span></div>
<div class="b" style="left:-89px;top:245px;width:300px;height:11px;text-align:center;overflow:hidden"><span style="display:inline-block;background:#d4d0c8;height:11px;padding:0 0px;position:relative"><span style="position:relative;top:0.29px;font-family:'Liberation Serif', serif;font-weight:bold;font-size:11px;line-height:11px;white-space:pre;display:block">FR.NO</span></span></div>
<div class="b" style="left:-89px;top:255px;width:300px;height:11px;text-align:center;overflow:hidden"><span style="display:inline-block;background:#d4d0c8;height:11px;padding:0 0px;position:relative"><span style="position:relative;top:0.39px;font-family:'Liberation Serif', serif;font-weight:bold;font-size:11px;line-height:11px;white-space:pre;display:block">35</span></span></div>
<div class="b" style="left:-89px;top:265px;width:300px;height:11px;text-align:center;overflow:hidden"><span style="display:inline-block;background:#d4d0c8;height:11px;padding:0 0px;position:relative"><span style="position:relative;top:0.39px;font-family:'Liberation Serif', serif;font-weight:bold;font-size:11px;line-height:11px;white-space:pre;display:block">71</span></span></div>
<div class="b" style="left:-89px;top:275px;width:300px;height:11px;text-align:center;overflow:hidden"><span style="display:inline-block;background:#d4d0c8;height:11px;padding:0 0px;position:relative"><span style="position:relative;top:0.39px;font-family:'Liberation Serif', serif;font-weight:bold;font-size:11px;line-height:11px;white-space:pre;display:block">107</span></span></div>
<div class="b" style="left:-89px;top:285px;width:300px;height:11px;text-align:center;overflow:hidden"><span style="display:inline-block;background:#d4d0c8;height:11px;padding:0 0px;position:relative"><span style="position:relative;top:0.39px;font-family:'Liberation Serif', serif;font-weight:bold;font-size:11px;line-height:11px;white-space:pre;display:block">143</span></span></div>
<div class="b" style="left:-89px;top:295px;width:300px;height:11px;text-align:center;overflow:hidden"><span style="display:inline-block;background:#d4d0c8;height:11px;padding:0 0px;position:relative"><span style="position:relative;top:0.39px;font-family:'Liberation Serif', serif;font-weight:bold;font-size:11px;line-height:11px;white-space:pre;display:block">161</span></span></div>
<div class="b" style="left:-89px;top:305px;width:300px;height:11px;text-align:center;overflow:hidden"><span style="display:inline-block;background:#d4d0c8;height:11px;padding:0 0px;position:relative"><span style="position:relative;top:0.39px;font-family:'Liberation Serif', serif;font-weight:bold;font-size:11px;line-height:11px;white-space:pre;display:block">179</span></span></div>
<div class="b" style="left:-89px;top:315px;width:300px;height:11px;text-align:center;overflow:hidden"><span style="display:inline-block;background:#d4d0c8;height:11px;padding:0 0px;position:relative"><span style="position:relative;top:0.39px;font-family:'Liberation Serif', serif;font-weight:bold;font-size:11px;line-height:11px;white-space:pre;display:block">215</span></span></div>
<div class="b" style="left:-89px;top:325px;width:300px;height:11px;text-align:center;overflow:hidden"><span style="display:inline-block;background:#d4d0c8;height:11px;padding:0 0px;position:relative"><span style="position:relative;top:0.39px;font-family:'Liberation Serif', serif;font-weight:bold;font-size:11px;line-height:11px;white-space:pre;display:block">MAX(Num.)</span></span></div>
<div class="b" style="left:-89px;top:335px;width:300px;height:11px;text-align:center;overflow:hidden"><span style="display:inline-block;background:#d4d0c8;height:11px;padding:0 0px;position:relative"><span style="position:relative;top:0.39px;font-family:'Liberation Serif', serif;font-weight:bold;font-size:11px;line-height:11px;white-space:pre;display:block">MAX.FR.(Num.)</span></span></div>
<div class="b" style="left:-89px;top:345px;width:300px;height:11px;text-align:center;overflow:hidden"><span style="display:inline-block;background:#d4d0c8;height:11px;padding:0 0px;position:relative"><span style="position:relative;top:0.39px;font-family:'Liberation Serif', serif;font-weight:bold;font-size:11px;line-height:11px;white-space:pre;display:block">MAX(Per.)</span></span></div>
<div class="b" style="left:-89px;top:355px;width:300px;height:11px;text-align:center;overflow:hidden"><span style="display:inline-block;background:#d4d0c8;height:11px;padding:0 0px;position:relative"><span style="position:relative;top:0.39px;font-family:'Liberation Serif', serif;font-weight:bold;font-size:11px;line-height:11px;white-space:pre;display:block">MAX.FR.(Per.)</span></span></div>
<div class="b" style="left:4px;top:372px;width:1234px;height:1px;background:#fff;"></div>
<div class="b" style="left:4px;top:373px;width:1234px;height:1px;background:#808080;"></div>
<div class="b" style="left:4px;top:375px;width:1234px;height:1px;background:#808080;"></div>
<div class="b" style="left:4px;top:376px;width:1234px;height:1px;background:#fff;"></div>
<div class="b" style="left:4px;top:377px;width:1234px;height:1px;background:#fff;"></div>
<div class="b" style="left:4px;top:378px;width:1064px;height:1px;background:#808080;"></div>
<div class="b" style="left:4px;top:378px;width:1px;height:386px;background:#808080;"></div>
<div class="b" style="left:5px;top:379px;width:1062px;height:384px;background:#000;"></div>
<div class="b" style="left:1067px;top:379px;width:1px;height:384px;background:#808080;"></div>
<div class="b" style="left:1068px;top:379px;width:1px;height:384px;background:#404040;"></div>
<svg class="b" style="left:0;top:0" width="1366" height="768"><rect x="55" y="409" width="961" height="324" fill="none" stroke="#fff" stroke-width="2"/><line x1="56" y1="463" x2="66" y2="463" stroke="#fff" stroke-width="2"/><line x1="1006" y1="463" x2="1017" y2="463" stroke="#fff" stroke-width="2"/><line x1="56" y1="517" x2="66" y2="517" stroke="#fff" stroke-width="2"/><line x1="1006" y1="517" x2="1017" y2="517" stroke="#fff" stroke-width="2"/><line x1="56" y1="625" x2="66" y2="625" stroke="#fff" stroke-width="2"/><line x1="1006" y1="625" x2="1017" y2="625" stroke="#fff" stroke-width="2"/><line x1="56" y1="679" x2="66" y2="679" stroke="#fff" stroke-width="2"/><line x1="1006" y1="679" x2="1017" y2="679" stroke="#fff" stroke-width="2"/><line x1="55" y1="571" x2="1016" y2="571" stroke="#fff" stroke-width="2"/><text x="53" y="415" font-family="Liberation Sans" font-size="11" fill="#fff" text-anchor="end">13000</text><text x="44" y="467" font-family="Liberation Sans" font-size="9" fill="#f0d0a0" text-anchor="end">8667</text><text x="44" y="521" font-family="Liberation Sans" font-size="9" fill="#f0d0a0" text-anchor="end">4333</text><text x="42.5" y="577" font-family="Liberation Sans" font-size="11" fill="#fff" text-anchor="end">0</text><text x="47" y="629" font-family="Liberation Sans" font-size="9" fill="#f0d0a0" text-anchor="end">-4333</text><text x="47" y="683" font-family="Liberation Sans" font-size="9" fill="#f0d0a0" text-anchor="end">-8667</text><text x="58" y="739" font-family="Liberation Sans" font-size="11" fill="#fff" text-anchor="end">-13000</text><text x="1022" y="415" font-family="Liberation Sans" font-size="11" fill="#fff" text-anchor="start">270000</text><text x="1022" y="467" font-family="Liberation Sans" font-size="9" fill="#f0d0a0" text-anchor="start">180000</text><text x="1022" y="521" font-family="Liberation Sans" font-size="9" fill="#f0d0a0" text-anchor="start">90000</text><text x="1022" y="628" font-family="Liberation Sans" font-size="9" fill="#f0d0a0" text-anchor="start">-90000</text><text x="1022" y="684" font-family="Liberation Sans" font-size="9" fill="#f0d0a0" text-anchor="start">-180000</text><text x="1022" y="740" font-family="Liberation Sans" font-size="11" fill="#fff" text-anchor="start">-270000</text><text x="967" y="463" font-family="Liberation Sans" font-size="11" fill="#f0d0a0" text-anchor="start">Hog(+)</text><text x="967" y="707" font-family="Liberation Sans" font-size="11" fill="#f0d0a0" text-anchor="start">Sag(-)</text><text x="55" y="756" font-family="Liberation Sans" font-size="12" fill="#fff" textLength="97" lengthAdjust="spacing">Shear Force [Mt]</text><text x="917.6" y="757" font-family="Liberation Sans" font-size="12" fill="#fff" textLength="138.4" lengthAdjust="spacing">Bending Moment [Mt-m]</text><line x1="209.5" y1="568" x2="209.5" y2="575" stroke="#ffff00" stroke-width="1"/><text x="209.5" y="590" font-family="Liberation Sans" font-size="9" fill="#fff" text-anchor="middle">35</text><line x1="358.3" y1="568" x2="358.3" y2="575" stroke="#ffff00" stroke-width="1"/><text x="358.3" y="590" font-family="Liberation Sans" font-size="9" fill="#fff" text-anchor="middle">71</text><line x1="508" y1="568" x2="508" y2="575" stroke="#ffff00" stroke-width="1"/><text x="508" y="590" font-family="Liberation Sans" font-size="9" fill="#fff" text-anchor="middle">107</text><line x1="657.6" y1="568" x2="657.6" y2="575" stroke="#ffff00" stroke-width="1"/><text x="657.6" y="590" font-family="Liberation Sans" font-size="9" fill="#fff" text-anchor="middle">143</text><line x1="732.5" y1="568" x2="732.5" y2="575" stroke="#ffff00" stroke-width="1"/><text x="732.5" y="590" font-family="Liberation Sans" font-size="9" fill="#fff" text-anchor="middle">161</text><line x1="807.6" y1="568" x2="807.6" y2="575" stroke="#ffff00" stroke-width="1"/><text x="807.6" y="590" font-family="Liberation Sans" font-size="9" fill="#fff" text-anchor="middle">179</text><line x1="956.2" y1="568" x2="956.2" y2="575" stroke="#ffff00" stroke-width="1"/><text x="956.2" y="590" font-family="Liberation Sans" font-size="9" fill="#fff" text-anchor="middle">215</text><polyline points="209,529 358.5,479 380,486 508,533 658,503.6 733,518 808,533 954,556.5" fill="none" stroke="#ffff00" stroke-width="1" stroke-dasharray="3 3"/><polyline points="209,530 358,487 733,487 808,521.5 954,549.5" fill="none" stroke="#00ffff" stroke-width="1" stroke-dasharray="3 3"/><polyline points="209,603 355,615 508,651 657.4,616.4 807.5,657.7 954,594.5" fill="none" stroke="#ffff00" stroke-width="1" stroke-dasharray="3 3"/><polyline points="209,606 358,656 732.6,656 811,616 954,592.5" fill="none" stroke="#00ffff" stroke-width="1" stroke-dasharray="3 3"/><polyline points="85,571 130,572 200,576 253,580 300,581.5 360,583 470,581 550,580.5 628,579 720,577.5 800,576 913,574.5 955,572 1000,571" fill="none" stroke="#ff0000" stroke-width="1.1"/><polyline points="56,570 60,567 65,566 85,565 90,567 95,567 130,565 138,562 150,563 165,560 192,555 194,556 195,560 210,561 215,564 218,567 233,566 310,567 330,566 355,565 358,561 361,557 364,562 369,566 448,566 505,564 509,559 512,554 517,557 523,565 630,565 646,566 652,565 660,556 666,565 795,565 800,564 804,560 807,557 810,562 814,565 849,565 851,566 943,567.5 962,562 974,561 978,566 999,566 1002,568 1008,569" fill="none" stroke="#ffffff" stroke-width="1.1"/><polyline points="55,571 127,569 214,555 306,538 400,528 436,526 455,526 530,531 730,546.6 880,563.5 943,569 977,571 1027,571" fill="none" stroke="#00ffff" stroke-width="1.3"/><polyline points="55,571 100,567 129.5,561 193.5,549 207,547.5 228,547.5 245,550.5 400,565 455,571 508,574 560,577 650,582 720,583.5 908,581.5 950,579 975,575.5 994,573 1007,572" fill="none" stroke="#ffff00" stroke-width="1.1"/><line x1="213.5" y1="547" x2="213.5" y2="572" stroke="#ffff00" stroke-width="1"/><line x1="454.5" y1="526" x2="454.5" y2="572" stroke="#00ffff" stroke-width="1"/><text x="173" y="526" font-family="Liberation Sans" font-size="9" fill="#ffff00" text-anchor="start">Value = 1936</text><text x="173" y="541" font-family="Liberation Sans" font-size="9" fill="#ffff00" text-anchor="start">Max SF FR = 36.00</text><text x="413" y="505" font-family="Liberation Sans" font-size="9" fill="#00ffff" text-anchor="start">Value = 74400</text><text x="413" y="521" font-family="Liberation Sans" font-size="9" fill="#00ffff" text-anchor="start">Max BM FR= 94.00</text></svg>
<div class="b" style="left:1067px;top:379px;width:171px;height:385px;border-top:1px solid #808080;border-left:1px solid #808080;border-right:1px solid #fff;border-bottom:1px solid #fff;box-shadow:inset 1px 1px 0 #404040"></div>
<div class="b" style="left:1070px;top:387px;width:165px;height:132px;border-top:1px solid #808080;border-left:1px solid #808080;border-right:1px solid #fff;border-bottom:1px solid #fff;box-shadow:inset 1px 1px 0 #fff, inset -1px -1px 0 #808080"></div>
<div class="t" style="left:1078.50px;top:382.69px;font-size:11px;line-height:11px;background:#d4d0c8;padding:0 2px;font-weight:normal;letter-spacing:-0.24px">Legend</div>
<div class="b" style="left:1077px;top:398px;width:13px;height:13px;background:#fff;"></div>
<div class="b" style="left:1077px;top:398px;width:13px;height:1px;background:#808080;"></div>
<div class="b" style="left:1077px;top:398px;width:1px;height:13px;background:#808080;"></div>
<div class="b" style="left:1078px;top:399px;width:11px;height:1px;background:#404040;"></div>
<div class="b" style="left:1078px;top:399px;width:1px;height:11px;background:#404040;"></div>
<div class="b" style="left:1077px;top:410px;width:13px;height:1px;background:#fff;"></div>
<div class="b" style="left:1089px;top:398px;width:1px;height:13px;background:#fff;"></div>
<div class="b" style="left:1078px;top:409px;width:11px;height:1px;background:#d4d0c8;"></div>
<div class="b" style="left:1088px;top:399px;width:1px;height:11px;background:#d4d0c8;"></div>
<svg class="b" style="left:1077px;top:398px" width="13" height="13"><path d="M3 6 l2 2 l4.5 -4.5 v2 l-4.5 4.5 l-2 -2z" fill="#000" stroke="#000" stroke-width="0.6"/></svg>
<div class="b" style="left:1094px;top:403px;width:36px;height:2px;background:#ffff00;"></div>
<div class="t" style="left:1136.0px;top:398.69px;letter-spacing:-0.25px;">Shear Force</div>
<div class="b" style="left:1077px;top:414px;width:13px;height:13px;background:#fff;"></div>
<div class="b" style="left:1077px;top:414px;width:13px;height:1px;background:#808080;"></div>
<div class="b" style="left:1077px;top:414px;width:1px;height:13px;background:#808080;"></div>
<div class="b" style="left:1078px;top:415px;width:11px;height:1px;background:#404040;"></div>
<div class="b" style="left:1078px;top:415px;width:1px;height:11px;background:#404040;"></div>
<div class="b" style="left:1077px;top:426px;width:13px;height:1px;background:#fff;"></div>
<div class="b" style="left:1089px;top:414px;width:1px;height:13px;background:#fff;"></div>
<div class="b" style="left:1078px;top:425px;width:11px;height:1px;background:#d4d0c8;"></div>
<div class="b" style="left:1088px;top:415px;width:1px;height:11px;background:#d4d0c8;"></div>
<svg class="b" style="left:1077px;top:414px" width="13" height="13"><path d="M3 6 l2 2 l4.5 -4.5 v2 l-4.5 4.5 l-2 -2z" fill="#000" stroke="#000" stroke-width="0.6"/></svg>
<div class="b" style="left:1094px;top:419px;width:36px;height:2px;background:#00ffff;"></div>
<div class="t" style="left:1136.0px;top:414.69px;letter-spacing:-0.246px;">Bending Moment</div>
<div class="b" style="left:1077px;top:430px;width:13px;height:13px;background:#fff;"></div>
<div class="b" style="left:1077px;top:430px;width:13px;height:1px;background:#808080;"></div>
<div class="b" style="left:1077px;top:430px;width:1px;height:13px;background:#808080;"></div>
<div class="b" style="left:1078px;top:431px;width:11px;height:1px;background:#404040;"></div>
<div class="b" style="left:1078px;top:431px;width:1px;height:11px;background:#404040;"></div>
<div class="b" style="left:1077px;top:442px;width:13px;height:1px;background:#fff;"></div>
<div class="b" style="left:1089px;top:430px;width:1px;height:13px;background:#fff;"></div>
<div class="b" style="left:1078px;top:441px;width:11px;height:1px;background:#d4d0c8;"></div>
<div class="b" style="left:1088px;top:431px;width:1px;height:11px;background:#d4d0c8;"></div>
<svg class="b" style="left:1077px;top:430px" width="13" height="13"><path d="M3 6 l2 2 l4.5 -4.5 v2 l-4.5 4.5 l-2 -2z" fill="#000" stroke="#000" stroke-width="0.6"/></svg>
<div class="b" style="left:1094px;top:435px;width:36px;height:1px;background:#ff0000;"></div>
<div class="t" style="left:1136.0px;top:430.69px;letter-spacing:-0.186px;">Buoyancy</div>
<div class="b" style="left:1077px;top:446px;width:13px;height:13px;background:#fff;"></div>
<div class="b" style="left:1077px;top:446px;width:13px;height:1px;background:#808080;"></div>
<div class="b" style="left:1077px;top:446px;width:1px;height:13px;background:#808080;"></div>
<div class="b" style="left:1078px;top:447px;width:11px;height:1px;background:#404040;"></div>
<div class="b" style="left:1078px;top:447px;width:1px;height:11px;background:#404040;"></div>
<div class="b" style="left:1077px;top:458px;width:13px;height:1px;background:#fff;"></div>
<div class="b" style="left:1089px;top:446px;width:1px;height:13px;background:#fff;"></div>
<div class="b" style="left:1078px;top:457px;width:11px;height:1px;background:#d4d0c8;"></div>
<div class="b" style="left:1088px;top:447px;width:1px;height:11px;background:#d4d0c8;"></div>
<svg class="b" style="left:1077px;top:446px" width="13" height="13"><path d="M3 6 l2 2 l4.5 -4.5 v2 l-4.5 4.5 l-2 -2z" fill="#000" stroke="#000" stroke-width="0.6"/></svg>
<div class="b" style="left:1094px;top:451px;width:36px;height:1px;background:#ffffff;"></div>
<div class="t" style="left:1136.0px;top:446.69px;">Weight</div>
<div class="b" style="left:1077px;top:461px;width:13px;height:13px;background:#fff;"></div>
<div class="b" style="left:1077px;top:461px;width:13px;height:1px;background:#808080;"></div>
<div class="b" style="left:1077px;top:461px;width:1px;height:13px;background:#808080;"></div>
<div class="b" style="left:1078px;top:462px;width:11px;height:1px;background:#404040;"></div>
<div class="b" style="left:1078px;top:462px;width:1px;height:11px;background:#404040;"></div>
<div class="b" style="left:1077px;top:473px;width:13px;height:1px;background:#fff;"></div>
<div class="b" style="left:1089px;top:461px;width:1px;height:13px;background:#fff;"></div>
<div class="b" style="left:1078px;top:472px;width:11px;height:1px;background:#d4d0c8;"></div>
<div class="b" style="left:1088px;top:462px;width:1px;height:11px;background:#d4d0c8;"></div>
<div class="t" style="left:1096.7px;top:462.69px;letter-spacing:-0.311px;">Hull Shape</div>
<svg class="b" style="left:1094px;top:480px" width="40" height="30"><line x1="1" y1="5" x2="36" y2="5" stroke="#ffff00" stroke-dasharray="4 2"/><line x1="1" y1="23.5" x2="36" y2="23.5" stroke="#00ffff" stroke-dasharray="4 2"/></svg>
<div class="t" style="left:1136.0px;top:480.19px;letter-spacing:-0.186px;">Allowable S. F.</div>
<div class="t" style="left:1136.0px;top:497.69px;letter-spacing:-0.254px;">Allowable B.M.</div>
<div class="b" style="left:1070px;top:527px;width:165px;height:61px;border-top:1px solid #808080;border-left:1px solid #808080;border-right:1px solid #fff;border-bottom:1px solid #fff;box-shadow:inset 1px 1px 0 #fff, inset -1px -1px 0 #808080"></div>
<div class="t" style="left:1078.50px;top:522.19px;font-size:11px;line-height:11px;background:#d4d0c8;padding:0 2px;font-weight:normal;letter-spacing:-0.136px">Sea / Harbour Condition</div>
<svg class="b" style="left:1079px;top:536px" width="12" height="12"><circle cx="6" cy="6" r="5.5" fill="#fff"/><path d="M10 2 A5.5 5.5 0 0 0 2 10" stroke="#808080" stroke-width="1" fill="none"/><path d="M2 10 A5.5 5.5 0 0 0 10 2" stroke="#fff" stroke-width="1" fill="none"/></svg>
<div class="t" style="left:1096.5px;top:536.69px;letter-spacing:-0.287px;">at Sea &amp; Harbour</div>
<svg class="b" style="left:1079px;top:552px" width="12" height="12"><circle cx="6" cy="6" r="5.5" fill="#fff"/><path d="M10 2 A5.5 5.5 0 0 0 2 10" stroke="#808080" stroke-width="1" fill="none"/><path d="M2 10 A5.5 5.5 0 0 0 10 2" stroke="#fff" stroke-width="1" fill="none"/><circle cx="6" cy="6" r="2" fill="#000"/></svg>
<div class="t" style="left:1096.5px;top:552.69px;letter-spacing:-0.2px;">at Sea</div>
<svg class="b" style="left:1079px;top:568px" width="12" height="12"><circle cx="6" cy="6" r="5.5" fill="#fff"/><path d="M10 2 A5.5 5.5 0 0 0 2 10" stroke="#808080" stroke-width="1" fill="none"/><path d="M2 10 A5.5 5.5 0 0 0 10 2" stroke="#fff" stroke-width="1" fill="none"/></svg>
<div class="t" style="left:1096.5px;top:568.69px;letter-spacing:-0.289px;">at Harbour</div>
<div class="b" style="left:1070px;top:595px;width:165px;height:62px;border-top:1px solid #808080;border-left:1px solid #808080;border-right:1px solid #fff;border-bottom:1px solid #fff;box-shadow:inset 1px 1px 0 #fff, inset -1px -1px 0 #808080"></div>
<div class="t" style="left:1075.00px;top:590.69px;font-size:11px;line-height:11px;background:#d4d0c8;padding:0 2px;font-weight:normal;letter-spacing:-0.125px">Scale</div>
<div class="t" style="left:1074.0px;top:609.19px;letter-spacing:-0.46px;">Max.SF</div>
<div class="t" style="left:1074.0px;top:633.69px;letter-spacing:-0.36px;">Max.BM</div>
<div class="b" style="left:1117px;top:606px;width:95px;height:19px;background:#fff;"></div>
<div class="b" style="left:1117px;top:606px;width:95px;height:1px;background:#808080;"></div>
<div class="b" style="left:1117px;top:606px;width:1px;height:19px;background:#808080;"></div>
<div class="b" style="left:1118px;top:607px;width:93px;height:1px;background:#404040;"></div>
<div class="b" style="left:1118px;top:607px;width:1px;height:17px;background:#404040;"></div>
<div class="b" style="left:1117px;top:624px;width:95px;height:1px;background:#fff;"></div>
<div class="b" style="left:1211px;top:606px;width:1px;height:19px;background:#fff;"></div>
<div class="b" style="left:1118px;top:623px;width:93px;height:1px;background:#d4d0c8;"></div>
<div class="b" style="left:1210px;top:607px;width:1px;height:17px;background:#d4d0c8;"></div>
<div class="t" style="right:173.75px;text-align:right;top:609.69px;letter-spacing:-0.15px;">13000</div>
<div class="b" style="left:1195px;top:608px;width:16px;height:8px;background:#d4d0c8;"></div>
<div class="b" style="left:1195px;top:608px;width:16px;height:1px;background:#fff;"></div>
<div class="b" style="left:1195px;top:608px;width:1px;height:8px;background:#fff;"></div>
<div class="b" style="left:1195px;top:615px;width:16px;height:1px;background:#404040;"></div>
<div class="b" style="left:1210px;top:608px;width:1px;height:8px;background:#404040;"></div>
<div class="b" style="left:1196px;top:614px;width:14px;height:1px;background:#808080;"></div>
<div class="b" style="left:1209px;top:609px;width:1px;height:6px;background:#808080;"></div>
<div class="b" style="left:1195px;top:615px;width:16px;height:8px;background:#d4d0c8;"></div>
<div class="b" style="left:1195px;top:615px;width:16px;height:1px;background:#fff;"></div>
<div class="b" style="left:1195px;top:615px;width:1px;height:8px;background:#fff;"></div>
<div class="b" style="left:1195px;top:622px;width:16px;height:1px;background:#404040;"></div>
<div class="b" style="left:1210px;top:615px;width:1px;height:8px;background:#404040;"></div>
<div class="b" style="left:1196px;top:621px;width:14px;height:1px;background:#808080;"></div>
<div class="b" style="left:1209px;top:616px;width:1px;height:6px;background:#808080;"></div>
<svg class="b" style="left:1195px;top:608px" width="16" height="15"><path d="M5 5 h6 l-3 -3z M5 10 h6 l-3 3z" fill="#000"/></svg>
<div class="b" style="left:1117px;top:630px;width:95px;height:19px;background:#fff;"></div>
<div class="b" style="left:1117px;top:630px;width:95px;height:1px;background:#808080;"></div>
<div class="b" style="left:1117px;top:630px;width:1px;height:19px;background:#808080;"></div>
<div class="b" style="left:1118px;top:631px;width:93px;height:1px;background:#404040;"></div>
<div class="b" style="left:1118px;top:631px;width:1px;height:17px;background:#404040;"></div>
<div class="b" style="left:1117px;top:648px;width:95px;height:1px;background:#fff;"></div>
<div class="b" style="left:1211px;top:630px;width:1px;height:19px;background:#fff;"></div>
<div class="b" style="left:1118px;top:647px;width:93px;height:1px;background:#d4d0c8;"></div>
<div class="b" style="left:1210px;top:631px;width:1px;height:17px;background:#d4d0c8;"></div>
<div class="t" style="right:173.79999999999995px;text-align:right;top:633.69px;letter-spacing:-0.2px;">270000</div>
<div class="b" style="left:1195px;top:632px;width:16px;height:8px;background:#d4d0c8;"></div>
<div class="b" style="left:1195px;top:632px;width:16px;height:1px;background:#fff;"></div>
<div class="b" style="left:1195px;top:632px;width:1px;height:8px;background:#fff;"></div>
<div class="b" style="left:1195px;top:639px;width:16px;height:1px;background:#404040;"></div>
<div class="b" style="left:1210px;top:632px;width:1px;height:8px;background:#404040;"></div>
<div class="b" style="left:1196px;top:638px;width:14px;height:1px;background:#808080;"></div>
<div class="b" style="left:1209px;top:633px;width:1px;height:6px;background:#808080;"></div>
<div class="b" style="left:1195px;top:639px;width:16px;height:8px;background:#d4d0c8;"></div>
<div class="b" style="left:1195px;top:639px;width:16px;height:1px;background:#fff;"></div>
<div class="b" style="left:1195px;top:639px;width:1px;height:8px;background:#fff;"></div>
<div class="b" style="left:1195px;top:646px;width:16px;height:1px;background:#404040;"></div>
<div class="b" style="left:1210px;top:639px;width:1px;height:8px;background:#404040;"></div>
<div class="b" style="left:1196px;top:645px;width:14px;height:1px;background:#808080;"></div>
<div class="b" style="left:1209px;top:640px;width:1px;height:6px;background:#808080;"></div>
<svg class="b" style="left:1195px;top:632px" width="16" height="15"><path d="M5 5 h6 l-3 -3z M5 10 h6 l-3 3z" fill="#000"/></svg>
<div class="b" style="left:1240px;top:141px;width:1px;height:625px;background:#808080;"></div>
<div class="b" style="left:1241px;top:141px;width:1px;height:625px;background:#404040;"></div>
<div class="b" style="left:1242px;top:141px;width:1px;height:625px;background:#fff;"></div>
<div class="b" style="left:0px;top:767px;width:1366px;height:1px;background:#fff;"></div>
<div class="b" style="left:1242px;top:141px;width:124px;height:1px;background:#fff;"></div>
<div class="b" style="left:1244px;top:148px;width:120px;height:183px;border-top:1px solid #808080;border-left:1px solid #808080;border-right:1px solid #fff;border-bottom:1px solid #fff;box-shadow:inset 1px 1px 0 #fff, inset -1px -1px 0 #808080"></div>
<div class="t" style="left:1249.60px;top:143.18px;font-size:11.6px;line-height:11.6px;background:#d4d0c8;padding:0 2px;font-weight:bold;letter-spacing:0.0px">Displacement</div>
<div class="t" style="left:1248.5px;top:157.57px;font-size:11.5px;line-height:11.5px;font-weight:bold;letter-spacing:0.75px;">LWT</div>
<div class="t" style="right:10.275000000000091px;text-align:right;top:157.57px;font-size:11.5px;line-height:11.5px;letter-spacing:-0.575px;">10478</div>
<div class="t" style="left:1248.5px;top:170.57px;font-size:11.5px;line-height:11.5px;font-weight:bold;letter-spacing:0.4px;">DWT</div>
<div class="t" style="right:10.299999999999955px;text-align:right;top:170.57px;font-size:11.5px;line-height:11.5px;letter-spacing:-0.6px;">159</div>
<div class="t" style="left:1248.5px;top:184.07px;font-size:11.5px;line-height:11.5px;font-weight:bold;letter-spacing:0.8px;">DISP.</div>
<div class="t" style="right:10.275000000000091px;text-align:right;top:184.07px;font-size:11.5px;line-height:11.5px;letter-spacing:-0.575px;">10636</div>
<div class="t" style="left:1248.5px;top:197.87px;font-size:11.5px;line-height:11.5px;color:#800000;font-weight:bold;letter-spacing:0.667px;">DWT RE.</div>
<div class="t" style="right:9.025000000000091px;text-align:right;top:197.87px;font-size:11.5px;line-height:11.5px;color:#800000;font-weight:bold;letter-spacing:0.675px;">57159</div>
<div class="t" style="left:1248.5px;top:211.47px;font-size:11.5px;line-height:11.5px;letter-spacing:-0.871px;">CARGO H.</div>
<div class="t" style="right:10.299999999999955px;text-align:right;top:211.47px;font-size:11.5px;line-height:11.5px;letter-spacing:-0.6px;">0.0</div>
<div class="t" style="left:1248.5px;top:226.57px;font-size:11.5px;line-height:11.5px;letter-spacing:-1.2px;">DECK</div>
<div class="t" style="right:10.299999999999955px;text-align:right;top:226.57px;font-size:11.5px;line-height:11.5px;letter-spacing:-0.6px;">0.0</div>
<div class="t" style="left:1248.5px;top:241.27px;font-size:11.5px;line-height:11.5px;letter-spacing:-0.525px;">W.B.T</div>
<div class="t" style="right:10.299999999999955px;text-align:right;top:241.27px;font-size:11.5px;line-height:11.5px;letter-spacing:-0.6px;">0.0</div>
<div class="t" style="left:1248.5px;top:257.27px;font-size:11.5px;line-height:11.5px;letter-spacing:-0.7px;">F.O.T</div>
<div class="t" style="right:10.299999999999955px;text-align:right;top:257.27px;font-size:11.5px;line-height:11.5px;letter-spacing:-0.6px;">0.0</div>
<div class="t" style="left:1248.5px;top:271.27px;font-size:11.5px;line-height:11.5px;letter-spacing:-1.05px;">D.O.T</div>
<div class="t" style="right:10.299999999999955px;text-align:right;top:271.27px;font-size:11.5px;line-height:11.5px;letter-spacing:-0.6px;">0.0</div>
<div class="t" style="left:1248.5px;top:286.47px;font-size:11.5px;line-height:11.5px;letter-spacing:-0.95px;">L.O.T</div>
<div class="t" style="right:10.299999999999955px;text-align:right;top:286.47px;font-size:11.5px;line-height:11.5px;letter-spacing:-0.6px;">0.0</div>
<div class="t" style="left:1248.5px;top:301.27px;font-size:11.5px;line-height:11.5px;letter-spacing:-0.1px;">F.W.T</div>
<div class="t" style="right:10.299999999999955px;text-align:right;top:301.27px;font-size:11.5px;line-height:11.5px;letter-spacing:-0.6px;">0.0</div>
<div class="t" style="left:1248.5px;top:315.57px;font-size:11.5px;line-height:11.5px;letter-spacing:-1.175px;">ETC.T</div>
<div class="t" style="right:10.299999999999955px;text-align:right;top:315.57px;font-size:11.5px;line-height:11.5px;letter-spacing:-0.6px;">0.0</div>
<div class="b" style="left:1244px;top:338px;width:120px;height:139px;border-top:1px solid #808080;border-left:1px solid #808080;border-right:1px solid #fff;border-bottom:1px solid #fff;box-shadow:inset 1px 1px 0 #fff, inset -1px -1px 0 #808080"></div>
<div class="t" style="left:1249.60px;top:332.68px;font-size:11.6px;line-height:11.6px;background:#d4d0c8;padding:0 2px;font-weight:bold;letter-spacing:0.0px">Draft &amp; List</div>
<div class="b" style="left:1253px;top:349px;width:13px;height:13px;background:#fff;"></div>
<div class="b" style="left:1253px;top:349px;width:13px;height:1px;background:#808080;"></div>
<div class="b" style="left:1253px;top:349px;width:1px;height:13px;background:#808080;"></div>
<div class="b" style="left:1254px;top:350px;width:11px;height:1px;background:#404040;"></div>
<div class="b" style="left:1254px;top:350px;width:1px;height:11px;background:#404040;"></div>
<div class="b" style="left:1253px;top:361px;width:13px;height:1px;background:#fff;"></div>
<div class="b" style="left:1265px;top:349px;width:1px;height:13px;background:#fff;"></div>
<div class="b" style="left:1254px;top:360px;width:11px;height:1px;background:#d4d0c8;"></div>
<div class="b" style="left:1264px;top:350px;width:1px;height:11px;background:#d4d0c8;"></div>
<div class="b" style="left:1270px;top:347px;width:87px;height:17px;border:1px dotted #000"></div>
<div class="t" style="left:1271.2px;top:349.57px;font-size:11.5px;line-height:11.5px;letter-spacing:-0.447px;">Draft at DraftMark</div>
<div class="t" style="left:1251.6px;top:365.57px;font-size:11.5px;line-height:11.5px;letter-spacing:-0.478px;">Draft(eq.)</div>
<div class="t" style="right:9.5px;text-align:right;top:365.57px;font-size:11.5px;line-height:11.5px;letter-spacing:-0.5px;">2.317</div>
<div class="t" style="left:1251.6px;top:381.42px;font-size:11.5px;line-height:11.5px;letter-spacing:-0.612px;">Fore(F.P)</div>
<div class="t" style="right:9.5px;text-align:right;top:381.42px;font-size:11.5px;line-height:11.5px;color:#ff0000;letter-spacing:-0.5px;">0.774</div>
<div class="t" style="left:1251.6px;top:397.27px;font-size:11.5px;line-height:11.5px;letter-spacing:-0.617px;">MidShip</div>
<div class="t" style="right:9.5px;text-align:right;top:397.27px;font-size:11.5px;line-height:11.5px;letter-spacing:-0.5px;">2.424</div>
<div class="t" style="left:1251.6px;top:413.12px;font-size:11.5px;line-height:11.5px;letter-spacing:-0.611px;">After(A.P)</div>
<div class="t" style="right:9.5px;text-align:right;top:413.12px;font-size:11.5px;line-height:11.5px;letter-spacing:-0.5px;">4.074</div>
<div class="t" style="left:1251.6px;top:428.97px;font-size:11.5px;line-height:11.5px;letter-spacing:-1.0px;">Trim</div>
<div class="t" style="right:9.660000000000082px;text-align:right;top:428.97px;font-size:11.5px;line-height:11.5px;letter-spacing:-0.66px;">-3.300</div>
<div class="t" style="left:1251.6px;top:444.82px;font-size:11.5px;line-height:11.5px;letter-spacing:-0.633px;">List(&#x27;)</div>
<div class="t" style="right:9.5px;text-align:right;top:444.82px;font-size:11.5px;line-height:11.5px;letter-spacing:-0.5px;">0.002</div>
<div class="t" style="left:1251.6px;top:460.67px;font-size:11.5px;line-height:11.5px;letter-spacing:-0.97px;">Prop.Imm(%)</div>
<div class="t" style="right:9.5px;text-align:right;top:460.67px;font-size:11.5px;line-height:11.5px;letter-spacing:-0.5px;">62.011</div>
<div class="b" style="left:1244px;top:484px;width:120px;height:110px;border-top:1px solid #808080;border-left:1px solid #808080;border-right:1px solid #fff;border-bottom:1px solid #fff;box-shadow:inset 1px 1px 0 #fff, inset -1px -1px 0 #808080"></div>
<div class="t" style="left:1249.60px;top:478.68px;font-size:11.6px;line-height:11.6px;background:#d4d0c8;padding:0 2px;font-weight:bold;letter-spacing:0.133px">Intact Stability</div>
<div class="t" style="left:1252.0px;top:494.67px;font-size:11.5px;line-height:11.5px;letter-spacing:-1.3px;">LCG</div>
<div class="t" style="right:8.299999999999955px;text-align:right;top:494.67px;font-size:11.5px;line-height:11.5px;letter-spacing:-0.8px;">-7.091</div>
<div class="t" style="left:1252.0px;top:508.27px;font-size:11.5px;line-height:11.5px;letter-spacing:-1.4px;">TCG</div>
<div class="t" style="right:8.0px;text-align:right;top:508.27px;font-size:11.5px;line-height:11.5px;letter-spacing:-0.5px;">0.001</div>
<div class="t" style="left:1252.0px;top:521.57px;font-size:11.5px;line-height:11.5px;letter-spacing:-1.15px;">KMT</div>
<div class="t" style="right:7.960000000000036px;text-align:right;top:521.57px;font-size:11.5px;line-height:11.5px;letter-spacing:-0.46px;">36.333</div>
<div class="t" style="left:1252.0px;top:536.07px;font-size:11.5px;line-height:11.5px;letter-spacing:-1.6px;">KG</div>
<div class="t" style="right:7.960000000000036px;text-align:right;top:536.07px;font-size:11.5px;line-height:11.5px;letter-spacing:-0.46px;">11.585</div>
<div class="t" style="left:1252.0px;top:549.97px;font-size:11.5px;line-height:11.5px;letter-spacing:-1.5px;">GM</div>
<div class="t" style="right:7.960000000000036px;text-align:right;top:549.97px;font-size:11.5px;line-height:11.5px;letter-spacing:-0.46px;">24.748</div>
<div class="t" style="left:1252.0px;top:564.47px;font-size:11.5px;line-height:11.5px;letter-spacing:-1.65px;">GGo</div>
<div class="t" style="right:7.7000000000000455px;text-align:right;top:564.47px;font-size:11.5px;line-height:11.5px;letter-spacing:-0.2px;">0.000</div>
<div class="t" style="left:1252.0px;top:579.07px;font-size:11.5px;line-height:11.5px;letter-spacing:-0.95px;">GoM</div>
<div class="t" style="right:7.960000000000036px;text-align:right;top:579.07px;font-size:11.5px;line-height:11.5px;letter-spacing:-0.46px;">24.748</div>
<div class="b" style="left:1244px;top:602px;width:120px;height:56px;border-top:1px solid #808080;border-left:1px solid #808080;border-right:1px solid #fff;border-bottom:1px solid #fff;box-shadow:inset 1px 1px 0 #fff, inset -1px -1px 0 #808080"></div>
<div class="t" style="left:1249.50px;top:597.18px;font-size:11.6px;line-height:11.6px;background:#d4d0c8;padding:0 2px;font-weight:bold;letter-spacing:0.136px">Max.Strength</div>
<svg class="b" style="left:1247px;top:610px" width="12" height="12"><circle cx="6" cy="6" r="5.5" fill="#fff"/><path d="M10 2 A5.5 5.5 0 0 0 2 10" stroke="#808080" stroke-width="1" fill="none"/><path d="M2 10 A5.5 5.5 0 0 0 10 2" stroke="#fff" stroke-width="1" fill="none"/><circle cx="6" cy="6" r="2" fill="#000"/></svg>
<div class="t" style="left:1263.4px;top:609.27px;font-size:11.5px;line-height:11.5px;letter-spacing:-0.667px;">Numeric</div>
<svg class="b" style="left:1325px;top:610px" width="12" height="12"><circle cx="6" cy="6" r="5.5" fill="#fff"/><path d="M10 2 A5.5 5.5 0 0 0 2 10" stroke="#808080" stroke-width="1" fill="none"/><path d="M2 10 A5.5 5.5 0 0 0 10 2" stroke="#fff" stroke-width="1" fill="none"/></svg>
<div class="t" style="left:1342px;top:609.27px;font-size:11.5px;line-height:11.5px;">%</div>
<div class="t" style="left:1247.3px;top:626.47px;font-size:11.5px;line-height:11.5px;letter-spacing:-0.95px;">S.F</div>
<div class="t" style="left:1287.7px;top:626.47px;font-size:11.5px;line-height:11.5px;color:#0000ff;letter-spacing:-0.5px;">63</div>
<div class="t" style="left:1309.6px;top:626.47px;font-size:11.5px;line-height:11.5px;color:#0000ff;letter-spacing:-1.0px;">(Fr.</div>
<div class="t" style="right:6.279999999999973px;text-align:right;top:626.47px;font-size:11.5px;line-height:11.5px;color:#0000ff;letter-spacing:-0.58px;">36.00)</div>
<div class="t" style="left:1247.3px;top:641.07px;font-size:11.5px;line-height:11.5px;letter-spacing:-1.2px;">B.M</div>
<div class="t" style="left:1287.7px;top:641.07px;font-size:11.5px;line-height:11.5px;color:#0000ff;letter-spacing:-0.5px;">53</div>
<div class="t" style="left:1309.6px;top:641.07px;font-size:11.5px;line-height:11.5px;color:#0000ff;letter-spacing:-1.0px;">(Fr.</div>
<div class="t" style="right:6.279999999999973px;text-align:right;top:641.07px;font-size:11.5px;line-height:11.5px;color:#0000ff;letter-spacing:-0.58px;">94.00)</div>
<div class="b" style="left:1244px;top:663px;width:120px;height:49px;border-top:1px solid #808080;border-left:1px solid #808080;border-right:1px solid #fff;border-bottom:1px solid #fff;box-shadow:inset 1px 1px 0 #fff, inset -1px -1px 0 #808080"></div>
<div class="t" style="left:1249.50px;top:658.18px;font-size:11.6px;line-height:11.6px;background:#d4d0c8;padding:0 2px;font-weight:bold;letter-spacing:-0.189px">Visibility</div>
<div class="t" style="left:1247.3px;top:670.77px;font-size:11.5px;line-height:11.5px;letter-spacing:-0.45px;">Invisible Dist.</div>
<div class="t" style="right:10.825000000000045px;text-align:right;top:670.77px;font-size:11.5px;line-height:11.5px;letter-spacing:-0.325px;">227.7</div>
<div class="t" style="left:1252.8px;top:682.97px;font-size:11.5px;line-height:11.5px;letter-spacing:-1.35px;">IMO</div>
<div class="t" style="left:1307.0px;top:682.97px;font-size:11.5px;line-height:11.5px;letter-spacing:-0.62px;">PANAMA</div>
<div class="t" style="left:1251.5px;top:694.77px;font-size:11.5px;line-height:11.5px;letter-spacing:-0.3px;">[Yes]</div>
<div class="t" style="left:1307.0px;top:694.77px;font-size:11.5px;line-height:11.5px;letter-spacing:-0.225px;">[Yes]</div>
<svg class="b" style="left:0;top:0" width="1366" height="768">
<defs>
<mask id="mtop" maskUnits="userSpaceOnUse" x="0" y="0" width="1366" height="768"><rect x="0" y="0" width="1366" height="667.5" fill="#000"/><text transform="translate(214.28,716) scale(0.9888,1)" font-family="Liberation Serif" font-weight="bold" font-size="147.3" fill="#fff" stroke="#fff" stroke-width="12.6" vector-effect="non-scaling-stroke" stroke-linejoin="round">S</text><text transform="translate(299.98,716) scale(0.8060,1)" font-family="Liberation Serif" font-weight="bold" font-size="147.3" fill="#fff" stroke="#fff" stroke-width="12.6" vector-effect="non-scaling-stroke" stroke-linejoin="round">E</text><text transform="translate(384.86,716) scale(0.7715,1)" font-family="Liberation Serif" font-weight="bold" font-size="147.3" fill="#fff" stroke="#fff" stroke-width="12.6" vector-effect="non-scaling-stroke" stroke-linejoin="round">A</text><text transform="translate(465.98,716) scale(0.8553,1)" font-family="Liberation Serif" font-weight="bold" font-size="147.3" fill="#fff" stroke="#fff" stroke-width="12.6" vector-effect="non-scaling-stroke" stroke-linejoin="round">T</text><text transform="translate(551.95,716) scale(0.8189,1)" font-family="Liberation Serif" font-weight="bold" font-size="147.3" fill="#fff" stroke="#fff" stroke-width="12.6" vector-effect="non-scaling-stroke" stroke-linejoin="round">R</text><text transform="translate(650.81,716) scale(0.8100,1)" font-family="Liberation Serif" font-weight="bold" font-size="147.3" fill="#fff" stroke="#fff" stroke-width="12.6" vector-effect="non-scaling-stroke" stroke-linejoin="round">A</text><text transform="translate(732.75,716) scale(0.8657,1)" font-family="Liberation Serif" font-weight="bold" font-size="147.3" fill="#fff" stroke="#fff" stroke-width="12.6" vector-effect="non-scaling-stroke" stroke-linejoin="round">C</text><text transform="translate(823.90,716) scale(0.8396,1)" font-family="Liberation Serif" font-weight="bold" font-size="147.3" fill="#fff" stroke="#fff" stroke-width="12.6" vector-effect="non-scaling-stroke" stroke-linejoin="round">K</text><text transform="translate(929.12,716) scale(0.7493,1)" font-family="Liberation Serif" font-weight="bold" font-size="147.3" fill="#fff" stroke="#fff" stroke-width="12.6" vector-effect="non-scaling-stroke" stroke-linejoin="round">E</text><text transform="translate(1004.62,716) scale(0.9522,1)" font-family="Liberation Serif" font-weight="bold" font-size="147.3" fill="#fff" stroke="#fff" stroke-width="12.6" vector-effect="non-scaling-stroke" stroke-linejoin="round">R</text><text transform="translate(1148.57,716) scale(0.9712,1)" font-family="Liberation Serif" font-weight="bold" font-size="147.3" fill="#fff" stroke="#fff" stroke-width="12.6" vector-effect="non-scaling-stroke" stroke-linejoin="round">R</text><text transform="translate(1256.68,716) scale(0.9005,1)" font-family="Liberation Serif" font-weight="bold" font-size="147.3" fill="#fff" stroke="#fff" stroke-width="12.6" vector-effect="non-scaling-stroke" stroke-linejoin="round">U</text><text transform="translate(214.28,716) scale(0.9888,1)" font-family="Liberation Serif" font-weight="bold" font-size="147.3" fill="#000" stroke="#000" stroke-width="7.4" vector-effect="non-scaling-stroke" stroke-linejoin="round">S</text><text transform="translate(299.98,716) scale(0.8060,1)" font-family="Liberation Serif" font-weight="bold" font-size="147.3" fill="#000" stroke="#000" stroke-width="7.4" vector-effect="non-scaling-stroke" stroke-linejoin="round">E</text><text transform="translate(384.86,716) scale(0.7715,1)" font-family="Liberation Serif" font-weight="bold" font-size="147.3" fill="#000" stroke="#000" stroke-width="7.4" vector-effect="non-scaling-stroke" stroke-linejoin="round">A</text><text transform="translate(465.98,716) scale(0.8553,1)" font-family="Liberation Serif" font-weight="bold" font-size="147.3" fill="#000" stroke="#000" stroke-width="7.4" vector-effect="non-scaling-stroke" stroke-linejoin="round">T</text><text transform="translate(551.95,716) scale(0.8189,1)" font-family="Liberation Serif" font-weight="bold" font-size="147.3" fill="#000" stroke="#000" stroke-width="7.4" vector-effect="non-scaling-stroke" stroke-linejoin="round">R</text><text transform="translate(650.81,716) scale(0.8100,1)" font-family="Liberation Serif" font-weight="bold" font-size="147.3" fill="#000" stroke="#000" stroke-width="7.4" vector-effect="non-scaling-stroke" stroke-linejoin="round">A</text><text transform="translate(732.75,716) scale(0.8657,1)" font-family="Liberation Serif" font-weight="bold" font-size="147.3" fill="#000" stroke="#000" stroke-width="7.4" vector-effect="non-scaling-stroke" stroke-linejoin="round">C</text><text transform="translate(823.90,716) scale(0.8396,1)" font-family="Liberation Serif" font-weight="bold" font-size="147.3" fill="#000" stroke="#000" stroke-width="7.4" vector-effect="non-scaling-stroke" stroke-linejoin="round">K</text><text transform="translate(929.12,716) scale(0.7493,1)" font-family="Liberation Serif" font-weight="bold" font-size="147.3" fill="#000" stroke="#000" stroke-width="7.4" vector-effect="non-scaling-stroke" stroke-linejoin="round">E</text><text transform="translate(1004.62,716) scale(0.9522,1)" font-family="Liberation Serif" font-weight="bold" font-size="147.3" fill="#000" stroke="#000" stroke-width="7.4" vector-effect="non-scaling-stroke" stroke-linejoin="round">R</text><text transform="translate(1148.57,716) scale(0.9712,1)" font-family="Liberation Serif" font-weight="bold" font-size="147.3" fill="#000" stroke="#000" stroke-width="7.4" vector-effect="non-scaling-stroke" stroke-linejoin="round">R</text><text transform="translate(1256.68,716) scale(0.9005,1)" font-family="Liberation Serif" font-weight="bold" font-size="147.3" fill="#000" stroke="#000" stroke-width="7.4" vector-effect="non-scaling-stroke" stroke-linejoin="round">U</text><rect x="0" y="667.5" width="1366" height="100" fill="#000"/></mask>
<mask id="mbot" maskUnits="userSpaceOnUse" x="0" y="0" width="1366" height="768"><rect x="0" y="0" width="1366" height="768" fill="#000"/><text transform="translate(214.28,716) scale(0.9888,1)" font-family="Liberation Serif" font-weight="bold" font-size="147.3" fill="#fff" stroke="#fff" stroke-width="10" vector-effect="non-scaling-stroke" stroke-linejoin="round">S</text><text transform="translate(299.98,716) scale(0.8060,1)" font-family="Liberation Serif" font-weight="bold" font-size="147.3" fill="#fff" stroke="#fff" stroke-width="10" vector-effect="non-scaling-stroke" stroke-linejoin="round">E</text><text transform="translate(384.86,716) scale(0.7715,1)" font-family="Liberation Serif" font-weight="bold" font-size="147.3" fill="#fff" stroke="#fff" stroke-width="10" vector-effect="non-scaling-stroke" stroke-linejoin="round">A</text><text transform="translate(465.98,716) scale(0.8553,1)" font-family="Liberation Serif" font-weight="bold" font-size="147.3" fill="#fff" stroke="#fff" stroke-width="10" vector-effect="non-scaling-stroke" stroke-linejoin="round">T</text><text transform="translate(551.95,716) scale(0.8189,1)" font-family="Liberation Serif" font-weight="bold" font-size="147.3" fill="#fff" stroke="#fff" stroke-width="10" vector-effect="non-scaling-stroke" stroke-linejoin="round">R</text><text transform="translate(650.81,716) scale(0.8100,1)" font-family="Liberation Serif" font-weight="bold" font-size="147.3" fill="#fff" stroke="#fff" stroke-width="10" vector-effect="non-scaling-stroke" stroke-linejoin="round">A</text><text transform="translate(732.75,716) scale(0.8657,1)" font-family="Liberation Serif" font-weight="bold" font-size="147.3" fill="#fff" stroke="#fff" stroke-width="10" vector-effect="non-scaling-stroke" stroke-linejoin="round">C</text><text transform="translate(823.90,716) scale(0.8396,1)" font-family="Liberation Serif" font-weight="bold" font-size="147.3" fill="#fff" stroke="#fff" stroke-width="10" vector-effect="non-scaling-stroke" stroke-linejoin="round">K</text><text transform="translate(929.12,716) scale(0.7493,1)" font-family="Liberation Serif" font-weight="bold" font-size="147.3" fill="#fff" stroke="#fff" stroke-width="10" vector-effect="non-scaling-stroke" stroke-linejoin="round">E</text><text transform="translate(1004.62,716) scale(0.9522,1)" font-family="Liberation Serif" font-weight="bold" font-size="147.3" fill="#fff" stroke="#fff" stroke-width="10" vector-effect="non-scaling-stroke" stroke-linejoin="round">R</text><text transform="translate(1148.57,716) scale(0.9712,1)" font-family="Liberation Serif" font-weight="bold" font-size="147.3" fill="#fff" stroke="#fff" stroke-width="10" vector-effect="non-scaling-stroke" stroke-linejoin="round">R</text><text transform="translate(1256.68,716) scale(0.9005,1)" font-family="Liberation Serif" font-weight="bold" font-size="147.3" fill="#fff" stroke="#fff" stroke-width="10" vector-effect="non-scaling-stroke" stroke-linejoin="round">U</text><rect x="0" y="0" width="1366" height="667.5" fill="#000"/><circle cx="1128" cy="704" r="17.5" fill="#fff"/></mask>
<mask id="sunmask" maskUnits="userSpaceOnUse" x="0" y="0" width="1366" height="768"><rect x="0" y="0" width="1366" height="768" fill="#fff"/><path d="M46 668 A54 54 0 0 1 154 668 Z" fill="#000"/></mask>
</defs>
<g opacity="0.6">
<polygon points="100.0,568.0 109.1,610.7 130.9,572.9 126.3,616.3 158.8,587.1 141.0,627.0 180.9,609.2 151.7,641.7 195.1,637.1 157.3,658.9 200.0,668.0 157.3,677.1 195.1,698.9 151.7,694.3 180.9,726.8 141.0,709.0 158.8,748.9 126.3,719.7 130.9,763.1 109.1,725.3 100.0,768.0 90.9,725.3 69.1,763.1 73.7,719.7 41.2,748.9 59.0,709.0 19.1,726.8 48.3,694.3 4.9,698.9 42.7,677.1 0.0,668.0 42.7,658.9 4.9,637.1 48.3,641.7 19.1,609.2 59.0,627.0 41.2,587.1 73.7,616.3 69.1,572.9 90.9,610.7" fill="#117db7" mask="url(#sunmask)"/>
<rect x="0" y="0" width="1366" height="768" fill="#117db7" mask="url(#mtop)"/>
<rect x="0" y="0" width="1366" height="768" fill="#117db7" mask="url(#mbot)"/>
</g></svg>
</body></html>
